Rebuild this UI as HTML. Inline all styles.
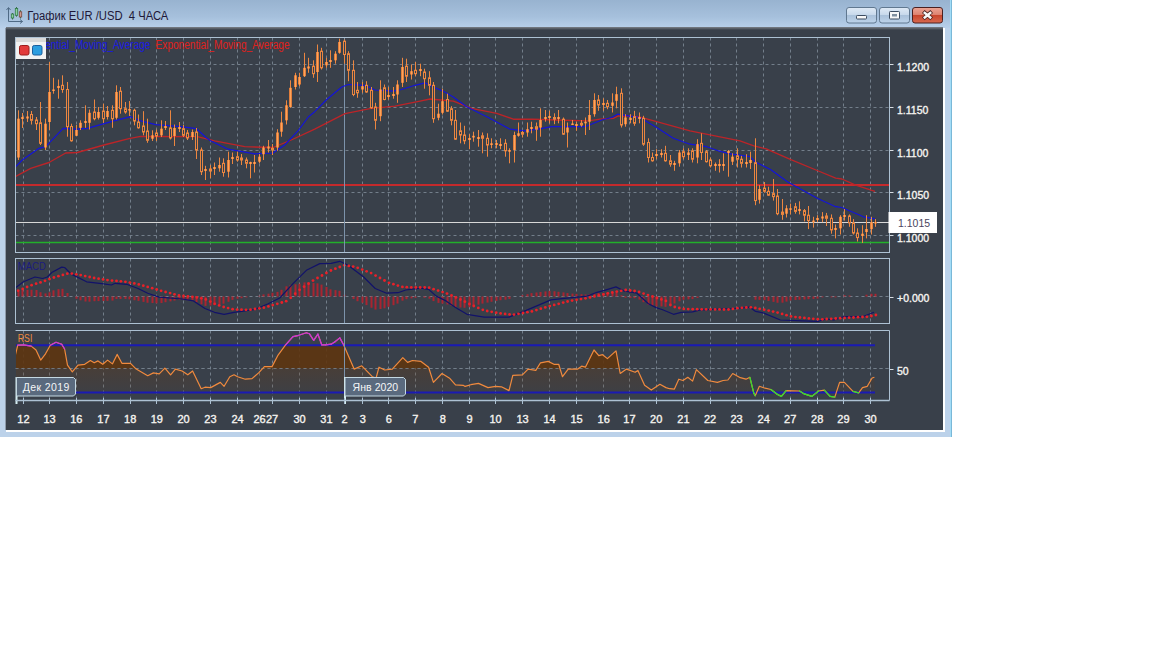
<!DOCTYPE html>
<html><head><meta charset="utf-8">
<style>
html,body{margin:0;padding:0;background:#fff;width:1152px;height:648px;overflow:hidden}
#win{position:absolute;left:0;top:0;width:952px;height:437px;background:#bcd2ea}
#tb{position:absolute;left:0;top:0;width:952px;height:28px;background:linear-gradient(#98b3d0,#a6c0dc 60%,#b8d0ea)}
#title{position:absolute;left:27px;top:6px;font:12px "Liberation Sans",sans-serif;color:#1c1633;white-space:pre}
#client{position:absolute;left:6px;top:28px;width:937px;height:402px;background:#39404a}
svg text{font-family:"Liberation Sans",sans-serif}
.ax{font-size:10.5px;fill:#f6f4f0;stroke:#f6f4f0;stroke-width:0.35px}
.xl{font-size:11px;fill:#f6f4f0;stroke:#f6f4f0;stroke-width:0.35px}
</style></head><body>
<div id="win">
<div id="tb"></div>
<div style="position:absolute;left:943px;top:28px;width:2px;height:404px;background:#fff"></div>
<div style="position:absolute;left:6px;top:430px;width:939px;height:2px;background:#fff"></div>
<div style="position:absolute;left:5px;top:28px;width:1px;height:402px;background:#8e9bab"></div>
<div style="position:absolute;left:950px;top:0;width:1px;height:437px;background:#a2dcf6"></div><div style="position:absolute;left:951px;top:0;width:1px;height:437px;background:#7ab8d8"></div>
<svg width="952" height="28" style="position:absolute;left:0;top:0">
<defs>
<linearGradient id="bmin" x1="0" y1="0" x2="0" y2="1"><stop offset="0" stop-color="#dfeaf6"/><stop offset="0.45" stop-color="#c9daec"/><stop offset="0.5" stop-color="#a9c1da"/><stop offset="1" stop-color="#bdd3ea"/></linearGradient>
<linearGradient id="bcls" x1="0" y1="0" x2="0" y2="1"><stop offset="0" stop-color="#eca595"/><stop offset="0.45" stop-color="#de8472"/><stop offset="0.5" stop-color="#c8452c"/><stop offset="1" stop-color="#d86a50"/></linearGradient>
</defs>
<text x="27.3" y="20" textLength="141" lengthAdjust="spacingAndGlyphs" style="font:12px 'Liberation Sans',sans-serif;fill:#1e1838;white-space:pre" xml:space="preserve">График EUR /USD  4 ЧАСА</text>
<g fill="none" stroke="#4f6a85" stroke-width="1">
<path d="M8.5 8 V21.5 H22.5" />
<path d="M6.5 10 L8.5 7.5 L10.5 10" />
<path d="M20 19.5 L22.5 21.5 L20 23.5" />
</g>
<path d="M12.5 13 V19.5 M16.5 7 V16.7 M20.5 10.2 V18.5" stroke="#3f6e52" stroke-width="1"/>
<rect x="11.3" y="14" width="2.4" height="4" fill="#8fd0a0" stroke="#2f7a48" stroke-width="0.8"/>
<rect x="15.3" y="8.5" width="2.4" height="6.8" fill="#8fd0a0" stroke="#2f7a48" stroke-width="0.8"/>
<rect x="19.3" y="11.8" width="2.4" height="5.2" fill="#d09a90" stroke="#7a4a40" stroke-width="0.8"/>
<rect x="846.5" y="7.5" width="30" height="15.5" rx="2.5" fill="url(#bmin)" stroke="#607890"/>
<rect x="879.5" y="7.5" width="30" height="15.5" rx="2.5" fill="url(#bmin)" stroke="#607890"/>
<rect x="912.5" y="7.5" width="30" height="15.5" rx="2.5" fill="url(#bcls)" stroke="#4a2020"/>
<rect x="856.5" y="15.5" width="10" height="3.5" rx="0.8" fill="#f8f8f8" stroke="#3c4c60"/>
<rect x="889.5" y="11.5" width="10" height="7.5" rx="0.8" fill="#f8f8f8" stroke="#3c4c60"/>
<rect x="892" y="14" width="5" height="2.5" fill="#8090a0"/>
<path d="M923.3 11.6 L931.7 18.8 M931.7 11.6 L923.3 18.8" stroke="#4a2420" stroke-width="4" stroke-linecap="butt"/>
<path d="M923.8 12.1 L931.2 18.3 M931.2 12.1 L923.8 18.3" stroke="#f8f8f8" stroke-width="2.5" stroke-linecap="butt"/>
</svg>
<div id="client"></div>
<svg width="952" height="437" style="position:absolute;left:0;top:0">
<defs>
<linearGradient id="shadow" x1="0" y1="0" x2="0" y2="1"><stop offset="0" stop-color="#7b8188"/><stop offset="1" stop-color="#39404a"/></linearGradient>
<linearGradient id="rsif" gradientUnits="userSpaceOnUse" x1="0" y1="345" x2="0" y2="400"><stop offset="0" stop-color="#5c3008" stop-opacity="1"/><stop offset="0.27" stop-color="#5c3008" stop-opacity="0.62"/><stop offset="0.55" stop-color="#5c3008" stop-opacity="0.25"/><stop offset="0.78" stop-color="#5c3008" stop-opacity="0.05"/><stop offset="1" stop-color="#5c3008" stop-opacity="0"/></linearGradient>
<clipPath id="cmain"><rect x="16" y="38" width="873" height="214"/></clipPath>
<clipPath id="cmacd"><rect x="16" y="259" width="873" height="64"/></clipPath>
<clipPath id="crsi"><rect x="16" y="331" width="873" height="69"/></clipPath>
</defs>
<rect x="6" y="27" width="937" height="3" fill="url(#shadow)"/>
<line x1="23.5" y1="37.5" x2="23.5" y2="252.5" stroke="#737e8a" stroke-dasharray="3,3"/>
<line x1="23.5" y1="258.5" x2="23.5" y2="323.5" stroke="#737e8a" stroke-dasharray="3,3"/>
<line x1="23.5" y1="330.5" x2="23.5" y2="400.5" stroke="#737e8a" stroke-dasharray="3,3"/>
<line x1="49.5" y1="37.5" x2="49.5" y2="252.5" stroke="#737e8a" stroke-dasharray="3,3"/>
<line x1="49.5" y1="258.5" x2="49.5" y2="323.5" stroke="#737e8a" stroke-dasharray="3,3"/>
<line x1="49.5" y1="330.5" x2="49.5" y2="400.5" stroke="#737e8a" stroke-dasharray="3,3"/>
<line x1="76.5" y1="37.5" x2="76.5" y2="252.5" stroke="#737e8a" stroke-dasharray="3,3"/>
<line x1="76.5" y1="258.5" x2="76.5" y2="323.5" stroke="#737e8a" stroke-dasharray="3,3"/>
<line x1="76.5" y1="330.5" x2="76.5" y2="400.5" stroke="#737e8a" stroke-dasharray="3,3"/>
<line x1="103.5" y1="37.5" x2="103.5" y2="252.5" stroke="#737e8a" stroke-dasharray="3,3"/>
<line x1="103.5" y1="258.5" x2="103.5" y2="323.5" stroke="#737e8a" stroke-dasharray="3,3"/>
<line x1="103.5" y1="330.5" x2="103.5" y2="400.5" stroke="#737e8a" stroke-dasharray="3,3"/>
<line x1="130.5" y1="37.5" x2="130.5" y2="252.5" stroke="#737e8a" stroke-dasharray="3,3"/>
<line x1="130.5" y1="258.5" x2="130.5" y2="323.5" stroke="#737e8a" stroke-dasharray="3,3"/>
<line x1="130.5" y1="330.5" x2="130.5" y2="400.5" stroke="#737e8a" stroke-dasharray="3,3"/>
<line x1="156.5" y1="37.5" x2="156.5" y2="252.5" stroke="#737e8a" stroke-dasharray="3,3"/>
<line x1="156.5" y1="258.5" x2="156.5" y2="323.5" stroke="#737e8a" stroke-dasharray="3,3"/>
<line x1="156.5" y1="330.5" x2="156.5" y2="400.5" stroke="#737e8a" stroke-dasharray="3,3"/>
<line x1="183.5" y1="37.5" x2="183.5" y2="252.5" stroke="#737e8a" stroke-dasharray="3,3"/>
<line x1="183.5" y1="258.5" x2="183.5" y2="323.5" stroke="#737e8a" stroke-dasharray="3,3"/>
<line x1="183.5" y1="330.5" x2="183.5" y2="400.5" stroke="#737e8a" stroke-dasharray="3,3"/>
<line x1="210.5" y1="37.5" x2="210.5" y2="252.5" stroke="#737e8a" stroke-dasharray="3,3"/>
<line x1="210.5" y1="258.5" x2="210.5" y2="323.5" stroke="#737e8a" stroke-dasharray="3,3"/>
<line x1="210.5" y1="330.5" x2="210.5" y2="400.5" stroke="#737e8a" stroke-dasharray="3,3"/>
<line x1="237.5" y1="37.5" x2="237.5" y2="252.5" stroke="#737e8a" stroke-dasharray="3,3"/>
<line x1="237.5" y1="258.5" x2="237.5" y2="323.5" stroke="#737e8a" stroke-dasharray="3,3"/>
<line x1="237.5" y1="330.5" x2="237.5" y2="400.5" stroke="#737e8a" stroke-dasharray="3,3"/>
<line x1="259.5" y1="37.5" x2="259.5" y2="252.5" stroke="#737e8a" stroke-dasharray="3,3"/>
<line x1="259.5" y1="258.5" x2="259.5" y2="323.5" stroke="#737e8a" stroke-dasharray="3,3"/>
<line x1="259.5" y1="330.5" x2="259.5" y2="400.5" stroke="#737e8a" stroke-dasharray="3,3"/>
<line x1="272.5" y1="37.5" x2="272.5" y2="252.5" stroke="#737e8a" stroke-dasharray="3,3"/>
<line x1="272.5" y1="258.5" x2="272.5" y2="323.5" stroke="#737e8a" stroke-dasharray="3,3"/>
<line x1="272.5" y1="330.5" x2="272.5" y2="400.5" stroke="#737e8a" stroke-dasharray="3,3"/>
<line x1="299.5" y1="37.5" x2="299.5" y2="252.5" stroke="#737e8a" stroke-dasharray="3,3"/>
<line x1="299.5" y1="258.5" x2="299.5" y2="323.5" stroke="#737e8a" stroke-dasharray="3,3"/>
<line x1="299.5" y1="330.5" x2="299.5" y2="400.5" stroke="#737e8a" stroke-dasharray="3,3"/>
<line x1="326.5" y1="37.5" x2="326.5" y2="252.5" stroke="#737e8a" stroke-dasharray="3,3"/>
<line x1="326.5" y1="258.5" x2="326.5" y2="323.5" stroke="#737e8a" stroke-dasharray="3,3"/>
<line x1="326.5" y1="330.5" x2="326.5" y2="400.5" stroke="#737e8a" stroke-dasharray="3,3"/>
<line x1="362.5" y1="37.5" x2="362.5" y2="252.5" stroke="#737e8a" stroke-dasharray="3,3"/>
<line x1="362.5" y1="258.5" x2="362.5" y2="323.5" stroke="#737e8a" stroke-dasharray="3,3"/>
<line x1="362.5" y1="330.5" x2="362.5" y2="400.5" stroke="#737e8a" stroke-dasharray="3,3"/>
<line x1="388.5" y1="37.5" x2="388.5" y2="252.5" stroke="#737e8a" stroke-dasharray="3,3"/>
<line x1="388.5" y1="258.5" x2="388.5" y2="323.5" stroke="#737e8a" stroke-dasharray="3,3"/>
<line x1="388.5" y1="330.5" x2="388.5" y2="400.5" stroke="#737e8a" stroke-dasharray="3,3"/>
<line x1="415.5" y1="37.5" x2="415.5" y2="252.5" stroke="#737e8a" stroke-dasharray="3,3"/>
<line x1="415.5" y1="258.5" x2="415.5" y2="323.5" stroke="#737e8a" stroke-dasharray="3,3"/>
<line x1="415.5" y1="330.5" x2="415.5" y2="400.5" stroke="#737e8a" stroke-dasharray="3,3"/>
<line x1="442.5" y1="37.5" x2="442.5" y2="252.5" stroke="#737e8a" stroke-dasharray="3,3"/>
<line x1="442.5" y1="258.5" x2="442.5" y2="323.5" stroke="#737e8a" stroke-dasharray="3,3"/>
<line x1="442.5" y1="330.5" x2="442.5" y2="400.5" stroke="#737e8a" stroke-dasharray="3,3"/>
<line x1="469.5" y1="37.5" x2="469.5" y2="252.5" stroke="#737e8a" stroke-dasharray="3,3"/>
<line x1="469.5" y1="258.5" x2="469.5" y2="323.5" stroke="#737e8a" stroke-dasharray="3,3"/>
<line x1="469.5" y1="330.5" x2="469.5" y2="400.5" stroke="#737e8a" stroke-dasharray="3,3"/>
<line x1="495.5" y1="37.5" x2="495.5" y2="252.5" stroke="#737e8a" stroke-dasharray="3,3"/>
<line x1="495.5" y1="258.5" x2="495.5" y2="323.5" stroke="#737e8a" stroke-dasharray="3,3"/>
<line x1="495.5" y1="330.5" x2="495.5" y2="400.5" stroke="#737e8a" stroke-dasharray="3,3"/>
<line x1="522.5" y1="37.5" x2="522.5" y2="252.5" stroke="#737e8a" stroke-dasharray="3,3"/>
<line x1="522.5" y1="258.5" x2="522.5" y2="323.5" stroke="#737e8a" stroke-dasharray="3,3"/>
<line x1="522.5" y1="330.5" x2="522.5" y2="400.5" stroke="#737e8a" stroke-dasharray="3,3"/>
<line x1="549.5" y1="37.5" x2="549.5" y2="252.5" stroke="#737e8a" stroke-dasharray="3,3"/>
<line x1="549.5" y1="258.5" x2="549.5" y2="323.5" stroke="#737e8a" stroke-dasharray="3,3"/>
<line x1="549.5" y1="330.5" x2="549.5" y2="400.5" stroke="#737e8a" stroke-dasharray="3,3"/>
<line x1="576.5" y1="37.5" x2="576.5" y2="252.5" stroke="#737e8a" stroke-dasharray="3,3"/>
<line x1="576.5" y1="258.5" x2="576.5" y2="323.5" stroke="#737e8a" stroke-dasharray="3,3"/>
<line x1="576.5" y1="330.5" x2="576.5" y2="400.5" stroke="#737e8a" stroke-dasharray="3,3"/>
<line x1="603.5" y1="37.5" x2="603.5" y2="252.5" stroke="#737e8a" stroke-dasharray="3,3"/>
<line x1="603.5" y1="258.5" x2="603.5" y2="323.5" stroke="#737e8a" stroke-dasharray="3,3"/>
<line x1="603.5" y1="330.5" x2="603.5" y2="400.5" stroke="#737e8a" stroke-dasharray="3,3"/>
<line x1="629.5" y1="37.5" x2="629.5" y2="252.5" stroke="#737e8a" stroke-dasharray="3,3"/>
<line x1="629.5" y1="258.5" x2="629.5" y2="323.5" stroke="#737e8a" stroke-dasharray="3,3"/>
<line x1="629.5" y1="330.5" x2="629.5" y2="400.5" stroke="#737e8a" stroke-dasharray="3,3"/>
<line x1="656.5" y1="37.5" x2="656.5" y2="252.5" stroke="#737e8a" stroke-dasharray="3,3"/>
<line x1="656.5" y1="258.5" x2="656.5" y2="323.5" stroke="#737e8a" stroke-dasharray="3,3"/>
<line x1="656.5" y1="330.5" x2="656.5" y2="400.5" stroke="#737e8a" stroke-dasharray="3,3"/>
<line x1="683.5" y1="37.5" x2="683.5" y2="252.5" stroke="#737e8a" stroke-dasharray="3,3"/>
<line x1="683.5" y1="258.5" x2="683.5" y2="323.5" stroke="#737e8a" stroke-dasharray="3,3"/>
<line x1="683.5" y1="330.5" x2="683.5" y2="400.5" stroke="#737e8a" stroke-dasharray="3,3"/>
<line x1="710.5" y1="37.5" x2="710.5" y2="252.5" stroke="#737e8a" stroke-dasharray="3,3"/>
<line x1="710.5" y1="258.5" x2="710.5" y2="323.5" stroke="#737e8a" stroke-dasharray="3,3"/>
<line x1="710.5" y1="330.5" x2="710.5" y2="400.5" stroke="#737e8a" stroke-dasharray="3,3"/>
<line x1="736.5" y1="37.5" x2="736.5" y2="252.5" stroke="#737e8a" stroke-dasharray="3,3"/>
<line x1="736.5" y1="258.5" x2="736.5" y2="323.5" stroke="#737e8a" stroke-dasharray="3,3"/>
<line x1="736.5" y1="330.5" x2="736.5" y2="400.5" stroke="#737e8a" stroke-dasharray="3,3"/>
<line x1="763.5" y1="37.5" x2="763.5" y2="252.5" stroke="#737e8a" stroke-dasharray="3,3"/>
<line x1="763.5" y1="258.5" x2="763.5" y2="323.5" stroke="#737e8a" stroke-dasharray="3,3"/>
<line x1="763.5" y1="330.5" x2="763.5" y2="400.5" stroke="#737e8a" stroke-dasharray="3,3"/>
<line x1="790.5" y1="37.5" x2="790.5" y2="252.5" stroke="#737e8a" stroke-dasharray="3,3"/>
<line x1="790.5" y1="258.5" x2="790.5" y2="323.5" stroke="#737e8a" stroke-dasharray="3,3"/>
<line x1="790.5" y1="330.5" x2="790.5" y2="400.5" stroke="#737e8a" stroke-dasharray="3,3"/>
<line x1="817.5" y1="37.5" x2="817.5" y2="252.5" stroke="#737e8a" stroke-dasharray="3,3"/>
<line x1="817.5" y1="258.5" x2="817.5" y2="323.5" stroke="#737e8a" stroke-dasharray="3,3"/>
<line x1="817.5" y1="330.5" x2="817.5" y2="400.5" stroke="#737e8a" stroke-dasharray="3,3"/>
<line x1="843.5" y1="37.5" x2="843.5" y2="252.5" stroke="#737e8a" stroke-dasharray="3,3"/>
<line x1="843.5" y1="258.5" x2="843.5" y2="323.5" stroke="#737e8a" stroke-dasharray="3,3"/>
<line x1="843.5" y1="330.5" x2="843.5" y2="400.5" stroke="#737e8a" stroke-dasharray="3,3"/>
<line x1="870.5" y1="37.5" x2="870.5" y2="252.5" stroke="#737e8a" stroke-dasharray="3,3"/>
<line x1="870.5" y1="258.5" x2="870.5" y2="323.5" stroke="#737e8a" stroke-dasharray="3,3"/>
<line x1="870.5" y1="330.5" x2="870.5" y2="400.5" stroke="#737e8a" stroke-dasharray="3,3"/>
<line x1="15.5" y1="64.5" x2="889.5" y2="64.5" stroke="#737e8a" stroke-dasharray="3,3"/>
<line x1="889.5" y1="64.5" x2="893.5" y2="64.5" stroke="#d8dde2"/>
<text x="897" y="71.0" class="ax">1.1200</text>
<line x1="15.5" y1="107.5" x2="889.5" y2="107.5" stroke="#737e8a" stroke-dasharray="3,3"/>
<line x1="889.5" y1="107.5" x2="893.5" y2="107.5" stroke="#d8dde2"/>
<text x="897" y="114.0" class="ax">1.1150</text>
<line x1="15.5" y1="150.5" x2="889.5" y2="150.5" stroke="#737e8a" stroke-dasharray="3,3"/>
<line x1="889.5" y1="150.5" x2="893.5" y2="150.5" stroke="#d8dde2"/>
<text x="897" y="157.0" class="ax">1.1100</text>
<line x1="15.5" y1="192.5" x2="889.5" y2="192.5" stroke="#737e8a" stroke-dasharray="3,3"/>
<line x1="889.5" y1="192.5" x2="893.5" y2="192.5" stroke="#d8dde2"/>
<text x="897" y="199.0" class="ax">1.1050</text>
<line x1="15.5" y1="235.5" x2="889.5" y2="235.5" stroke="#737e8a" stroke-dasharray="3,3"/>
<line x1="889.5" y1="235.5" x2="893.5" y2="235.5" stroke="#d8dde2"/>
<text x="897" y="242.0" class="ax">1.1000</text>
<line x1="15.5" y1="296.5" x2="889.5" y2="296.5" stroke="#737e8a" stroke-dasharray="3,3"/>
<line x1="889.5" y1="297.5" x2="893.5" y2="297.5" stroke="#d8dde2"/>
<text x="897" y="302" class="ax">+0.000</text>
<line x1="15.5" y1="368.5" x2="889.5" y2="368.5" stroke="#737e8a" stroke-dasharray="3,3"/>
<line x1="889.5" y1="369.5" x2="893.5" y2="369.5" stroke="#d8dde2"/>
<text x="897" y="375" class="ax">50</text>
<defs><linearGradient id="cbody" x1="0" y1="0" x2="1" y2="0"><stop offset="0" stop-color="#d06a2c"/><stop offset="0.5" stop-color="#ffa45a"/><stop offset="1" stop-color="#d06a2c"/></linearGradient></defs>
<g clip-path="url(#cmain)">
<line x1="16" y1="185" x2="889" y2="185" stroke="#c42a2c" stroke-width="1.8"/>
<line x1="16" y1="242.5" x2="889" y2="242.5" stroke="#22b02a" stroke-width="1.7"/>
<line x1="16" y1="222.5" x2="889" y2="222.5" stroke="#d8d8d8" stroke-width="1"/>
<line x1="344.5" y1="38" x2="344.5" y2="252" stroke="#7d93ab" stroke-width="1"/>
<polyline points="15.0,176.7 30.7,168.3 49.0,162.5 65.7,153.0 77.3,152.5 104.0,145.0 129.0,138.7 140.7,136.3 197.3,136.7 214.7,140.8 244.7,146.7 273.0,147.5 291.3,140.0 314.7,129.2 345.0,113.7 370.0,108.7 395.0,106.2 420.0,101.2 430.0,99.0 453.3,101.2 471.7,108.3 496.7,113.3 513.3,119.2 533.3,119.2 555.0,120.0 588.3,120.8 600.0,119.2 613.3,118.3 618.3,115.8 638.3,116.7 656.7,121.7 690.0,130.8 715.0,135.8 740.0,140.8 753.9,145.8 766.2,148.9 790.9,159.7 817.2,170.5 835.7,178.2 841.9,179.0 855.7,185.1 875.0,191.3" fill="none" stroke="#bc2428" stroke-width="1.35" stroke-linejoin="round"/>
<polyline points="15.0,167.5 22.3,160.0 39.0,148.3 45.7,146.7 63.2,128.3 77.3,129.2 87.3,128.3 114.0,120.8 130.7,116.7 140.7,120.8 155.7,124.7 180.7,126.7 196.5,128.7 206.0,137.5 210.5,140.8 228.0,149.2 254.7,153.8 273.0,153.0 284.7,145.0 298.0,130.8 308.3,117.0 314.7,111.7 326.7,99.5 341.7,87.0 348.3,84.5 365.0,85.3 375.0,90.0 393.3,91.2 401.7,89.5 415.0,85.3 425.0,82.8 433.3,87.0 443.3,91.2 453.3,97.0 466.7,106.7 488.3,117.5 510.0,129.2 525.0,130.8 538.3,129.2 551.7,126.7 585.0,126.7 601.7,120.0 611.7,117.5 617.5,114.2 628.3,115.8 640.0,117.5 656.7,127.5 673.3,138.3 690.0,144.2 706.7,146.7 718.3,150.8 731.7,154.2 750.0,156.7 755.0,161.7 770.9,169.7 787.8,182.0 817.2,198.2 835.7,206.7 841.9,207.5 863.5,216.8 875.0,218.8" fill="none" stroke="#1414d8" stroke-width="1.2" stroke-linejoin="round"/>
<line x1="18.5" y1="110.3" x2="18.5" y2="160.0" stroke="#ec8640"/>
<rect x="17" y="118.7" width="3" height="38.8" fill="url(#cbody)"/>
<line x1="22.5" y1="113.0" x2="22.5" y2="128.0" stroke="#ec8640"/>
<rect x="21" y="117.0" width="3" height="2.0" fill="url(#cbody)"/>
<line x1="27.5" y1="111.0" x2="27.5" y2="122.0" stroke="#ec8640"/>
<rect x="26" y="116.5" width="3" height="2.0" fill="url(#cbody)"/>
<line x1="31.5" y1="111.0" x2="31.5" y2="124.5" stroke="#ec8640"/>
<rect x="30.5" y="114.5" width="2" height="5.8" fill="#39404a" stroke="#ec8640"/>
<line x1="36.5" y1="117.0" x2="36.5" y2="130.0" stroke="#ec8640"/>
<rect x="35.5" y="120.0" width="2" height="3.7" fill="#39404a" stroke="#ec8640"/>
<line x1="40.5" y1="102.0" x2="40.5" y2="145.0" stroke="#ec8640"/>
<rect x="39.5" y="122.8" width="2" height="20.5" fill="#39404a" stroke="#ec8640"/>
<line x1="45.5" y1="118.7" x2="45.5" y2="150.0" stroke="#ec8640"/>
<rect x="44" y="123.7" width="3" height="23.8" fill="url(#cbody)"/>
<line x1="49.5" y1="62.0" x2="49.5" y2="130.0" stroke="#ec8640"/>
<rect x="48" y="92.0" width="3" height="30.0" fill="url(#cbody)"/>
<line x1="53.5" y1="77.8" x2="53.5" y2="93.7" stroke="#ec8640"/>
<rect x="52" y="89.5" width="3" height="1.5" fill="url(#cbody)"/>
<line x1="58.5" y1="79.5" x2="58.5" y2="98.7" stroke="#ec8640"/>
<rect x="57" y="86.0" width="3" height="2.0" fill="url(#cbody)"/>
<line x1="62.5" y1="75.3" x2="62.5" y2="92.8" stroke="#ec8640"/>
<rect x="61.5" y="85.3" width="2" height="4.2" fill="#39404a" stroke="#ec8640"/>
<line x1="67.5" y1="82.0" x2="67.5" y2="136.7" stroke="#ec8640"/>
<rect x="66.5" y="89.5" width="2" height="37.2" fill="#39404a" stroke="#ec8640"/>
<line x1="71.5" y1="123.7" x2="71.5" y2="141.7" stroke="#ec8640"/>
<rect x="70.5" y="126.5" width="2" height="14.3" fill="#39404a" stroke="#ec8640"/>
<line x1="76.5" y1="125.0" x2="76.5" y2="136.0" stroke="#ec8640"/>
<rect x="75" y="130.0" width="3" height="5.8" fill="url(#cbody)"/>
<line x1="80.5" y1="120.3" x2="80.5" y2="130.0" stroke="#ec8640"/>
<rect x="79" y="122.8" width="3" height="5.0" fill="url(#cbody)"/>
<line x1="85.5" y1="105.3" x2="85.5" y2="127.8" stroke="#ec8640"/>
<rect x="84" y="121.0" width="3" height="2.0" fill="url(#cbody)"/>
<line x1="89.5" y1="109.5" x2="89.5" y2="129.5" stroke="#ec8640"/>
<rect x="88" y="112.8" width="3" height="10.0" fill="url(#cbody)"/>
<line x1="94.5" y1="99.5" x2="94.5" y2="120.3" stroke="#ec8640"/>
<rect x="93.5" y="112.0" width="2" height="6.7" fill="#39404a" stroke="#ec8640"/>
<line x1="98.5" y1="107.0" x2="98.5" y2="119.5" stroke="#ec8640"/>
<rect x="97" y="112.0" width="3" height="5.8" fill="url(#cbody)"/>
<line x1="103.5" y1="103.7" x2="103.5" y2="122.8" stroke="#ec8640"/>
<rect x="102.5" y="111.0" width="2" height="7.7" fill="#39404a" stroke="#ec8640"/>
<line x1="107.5" y1="106.0" x2="107.5" y2="119.5" stroke="#ec8640"/>
<rect x="106" y="111.0" width="3" height="6.0" fill="url(#cbody)"/>
<line x1="112.5" y1="105.3" x2="112.5" y2="127.8" stroke="#ec8640"/>
<rect x="111.5" y="110.3" width="2" height="8.4" fill="#39404a" stroke="#ec8640"/>
<line x1="116.5" y1="85.3" x2="116.5" y2="119.5" stroke="#ec8640"/>
<rect x="115" y="92.0" width="3" height="25.8" fill="url(#cbody)"/>
<line x1="120.5" y1="87.0" x2="120.5" y2="113.7" stroke="#ec8640"/>
<rect x="119.5" y="91.2" width="2" height="17.5" fill="#39404a" stroke="#ec8640"/>
<line x1="125.5" y1="102.0" x2="125.5" y2="113.7" stroke="#ec8640"/>
<rect x="124.5" y="108.7" width="2" height="3.3" fill="#39404a" stroke="#ec8640"/>
<line x1="129.5" y1="101.0" x2="129.5" y2="116.0" stroke="#ec8640"/>
<rect x="128" y="109.0" width="3" height="1.5" fill="url(#cbody)"/>
<line x1="134.5" y1="108.7" x2="134.5" y2="125.3" stroke="#ec8640"/>
<rect x="133.5" y="110.3" width="2" height="10.7" fill="#39404a" stroke="#ec8640"/>
<line x1="138.5" y1="114.5" x2="138.5" y2="128.7" stroke="#ec8640"/>
<rect x="137.5" y="122.0" width="2" height="5.8" fill="#39404a" stroke="#ec8640"/>
<line x1="143.5" y1="111.2" x2="143.5" y2="135.3" stroke="#ec8640"/>
<rect x="142.5" y="126.0" width="2" height="6.0" fill="#39404a" stroke="#ec8640"/>
<line x1="147.5" y1="118.7" x2="147.5" y2="142.8" stroke="#ec8640"/>
<rect x="146.5" y="131.0" width="2" height="9.3" fill="#39404a" stroke="#ec8640"/>
<line x1="152.5" y1="130.3" x2="152.5" y2="141.0" stroke="#ec8640"/>
<rect x="151" y="135.3" width="3" height="3.4" fill="url(#cbody)"/>
<line x1="156.5" y1="129.5" x2="156.5" y2="141.0" stroke="#ec8640"/>
<rect x="155.5" y="133.0" width="2" height="3.0" fill="#39404a" stroke="#ec8640"/>
<line x1="161.5" y1="120.3" x2="161.5" y2="137.0" stroke="#ec8640"/>
<rect x="160" y="128.7" width="3" height="6.6" fill="url(#cbody)"/>
<line x1="165.5" y1="121.0" x2="165.5" y2="130.0" stroke="#ec8640"/>
<rect x="164" y="126.0" width="3" height="2.0" fill="url(#cbody)"/>
<line x1="170.5" y1="110.3" x2="170.5" y2="139.5" stroke="#ec8640"/>
<rect x="169.5" y="128.0" width="2" height="10.0" fill="#39404a" stroke="#ec8640"/>
<line x1="174.5" y1="124.5" x2="174.5" y2="146.0" stroke="#ec8640"/>
<rect x="173" y="128.0" width="3" height="8.0" fill="url(#cbody)"/>
<line x1="179.5" y1="122.0" x2="179.5" y2="132.0" stroke="#ec8640"/>
<rect x="178" y="127.0" width="3" height="2.0" fill="url(#cbody)"/>
<line x1="183.5" y1="125.0" x2="183.5" y2="137.0" stroke="#ec8640"/>
<rect x="182.5" y="128.7" width="2" height="6.6" fill="#39404a" stroke="#ec8640"/>
<line x1="187.5" y1="130.0" x2="187.5" y2="140.0" stroke="#ec8640"/>
<rect x="186.5" y="133.0" width="2" height="5.0" fill="#39404a" stroke="#ec8640"/>
<line x1="192.5" y1="129.5" x2="192.5" y2="140.0" stroke="#ec8640"/>
<rect x="191" y="132.0" width="3" height="5.0" fill="url(#cbody)"/>
<line x1="196.5" y1="128.0" x2="196.5" y2="159.0" stroke="#ec8640"/>
<rect x="195.5" y="132.0" width="2" height="18.0" fill="#39404a" stroke="#ec8640"/>
<line x1="201.5" y1="147.5" x2="201.5" y2="175.0" stroke="#ec8640"/>
<rect x="200.5" y="150.0" width="2" height="21.7" fill="#39404a" stroke="#ec8640"/>
<line x1="205.5" y1="165.8" x2="205.5" y2="180.0" stroke="#ec8640"/>
<rect x="204" y="169.0" width="3" height="2.0" fill="url(#cbody)"/>
<line x1="210.5" y1="165.0" x2="210.5" y2="178.3" stroke="#ec8640"/>
<rect x="209.5" y="169.0" width="2" height="2.0" fill="#39404a" stroke="#ec8640"/>
<line x1="214.5" y1="162.5" x2="214.5" y2="175.0" stroke="#ec8640"/>
<rect x="213" y="167.0" width="3" height="2.0" fill="url(#cbody)"/>
<line x1="219.5" y1="157.5" x2="219.5" y2="171.7" stroke="#ec8640"/>
<rect x="218" y="165.0" width="3" height="3.3" fill="url(#cbody)"/>
<line x1="223.5" y1="158.3" x2="223.5" y2="176.7" stroke="#ec8640"/>
<rect x="222.5" y="163.3" width="2" height="9.2" fill="#39404a" stroke="#ec8640"/>
<line x1="228.5" y1="151.7" x2="228.5" y2="177.5" stroke="#ec8640"/>
<rect x="227" y="160.0" width="3" height="11.7" fill="url(#cbody)"/>
<line x1="232.5" y1="152.5" x2="232.5" y2="164.0" stroke="#ec8640"/>
<rect x="231" y="157.0" width="3" height="2.0" fill="url(#cbody)"/>
<line x1="237.5" y1="151.7" x2="237.5" y2="161.7" stroke="#ec8640"/>
<rect x="236.5" y="156.7" width="2" height="3.3" fill="#39404a" stroke="#ec8640"/>
<line x1="241.5" y1="154.0" x2="241.5" y2="165.0" stroke="#ec8640"/>
<rect x="240.5" y="158.0" width="2" height="2.0" fill="#39404a" stroke="#ec8640"/>
<line x1="246.5" y1="157.5" x2="246.5" y2="168.3" stroke="#ec8640"/>
<rect x="245.5" y="160.0" width="2" height="3.3" fill="#39404a" stroke="#ec8640"/>
<line x1="250.5" y1="161.7" x2="250.5" y2="178.3" stroke="#ec8640"/>
<rect x="249" y="162.0" width="3" height="2.0" fill="url(#cbody)"/>
<line x1="254.5" y1="155.0" x2="254.5" y2="172.5" stroke="#ec8640"/>
<rect x="253" y="162.0" width="3" height="2.0" fill="url(#cbody)"/>
<line x1="259.5" y1="154.0" x2="259.5" y2="163.3" stroke="#ec8640"/>
<rect x="258" y="156.7" width="3" height="5.0" fill="url(#cbody)"/>
<line x1="263.5" y1="145.8" x2="263.5" y2="160.0" stroke="#ec8640"/>
<rect x="262" y="147.5" width="3" height="6.7" fill="url(#cbody)"/>
<line x1="268.5" y1="140.0" x2="268.5" y2="152.5" stroke="#ec8640"/>
<rect x="267" y="146.5" width="3" height="2.0" fill="url(#cbody)"/>
<line x1="272.5" y1="144.0" x2="272.5" y2="155.0" stroke="#ec8640"/>
<rect x="271.5" y="148.3" width="2" height="1.7" fill="#39404a" stroke="#ec8640"/>
<line x1="277.5" y1="129.2" x2="277.5" y2="150.8" stroke="#ec8640"/>
<rect x="276" y="132.5" width="3" height="15.0" fill="url(#cbody)"/>
<line x1="281.5" y1="111.7" x2="281.5" y2="136.7" stroke="#ec8640"/>
<rect x="280" y="122.5" width="3" height="9.2" fill="url(#cbody)"/>
<line x1="286.5" y1="100.3" x2="286.5" y2="124.5" stroke="#ec8640"/>
<rect x="285" y="105.3" width="3" height="15.0" fill="url(#cbody)"/>
<line x1="290.5" y1="80.3" x2="290.5" y2="107.8" stroke="#ec8640"/>
<rect x="289" y="87.8" width="3" height="19.2" fill="url(#cbody)"/>
<line x1="295.5" y1="72.8" x2="295.5" y2="89.5" stroke="#ec8640"/>
<rect x="294" y="75.3" width="3" height="11.7" fill="url(#cbody)"/>
<line x1="299.5" y1="72.8" x2="299.5" y2="86.2" stroke="#ec8640"/>
<rect x="298" y="77.0" width="3" height="7.5" fill="url(#cbody)"/>
<line x1="304.5" y1="52.8" x2="304.5" y2="77.0" stroke="#ec8640"/>
<rect x="303" y="67.8" width="3" height="8.4" fill="url(#cbody)"/>
<line x1="308.5" y1="57.8" x2="308.5" y2="72.8" stroke="#ec8640"/>
<rect x="307" y="66.5" width="3" height="2.0" fill="url(#cbody)"/>
<line x1="313.5" y1="60.3" x2="313.5" y2="77.8" stroke="#ec8640"/>
<rect x="312.5" y="66.2" width="2" height="7.5" fill="#39404a" stroke="#ec8640"/>
<line x1="317.5" y1="44.5" x2="317.5" y2="82.0" stroke="#ec8640"/>
<rect x="316" y="52.0" width="3" height="20.0" fill="url(#cbody)"/>
<line x1="321.5" y1="47.8" x2="321.5" y2="69.5" stroke="#ec8640"/>
<rect x="320.5" y="51.2" width="2" height="16.6" fill="#39404a" stroke="#ec8640"/>
<line x1="326.5" y1="57.8" x2="326.5" y2="67.8" stroke="#ec8640"/>
<rect x="325" y="62.0" width="3" height="3.3" fill="url(#cbody)"/>
<line x1="330.5" y1="50.3" x2="330.5" y2="67.8" stroke="#ec8640"/>
<rect x="329" y="60.0" width="3" height="2.0" fill="url(#cbody)"/>
<line x1="335.5" y1="51.2" x2="335.5" y2="63.7" stroke="#ec8640"/>
<rect x="334" y="53.7" width="3" height="6.6" fill="url(#cbody)"/>
<line x1="339.5" y1="38.7" x2="339.5" y2="53.7" stroke="#ec8640"/>
<rect x="338" y="42.0" width="3" height="10.8" fill="url(#cbody)"/>
<line x1="344.5" y1="39.5" x2="344.5" y2="63.7" stroke="#ec8640"/>
<rect x="343.5" y="41.2" width="2" height="13.3" fill="#39404a" stroke="#ec8640"/>
<line x1="348.5" y1="51.2" x2="348.5" y2="81.2" stroke="#ec8640"/>
<rect x="347.5" y="53.7" width="2" height="16.6" fill="#39404a" stroke="#ec8640"/>
<line x1="353.5" y1="60.3" x2="353.5" y2="96.2" stroke="#ec8640"/>
<rect x="352.5" y="70.3" width="2" height="24.2" fill="#39404a" stroke="#ec8640"/>
<line x1="357.5" y1="82.0" x2="357.5" y2="97.8" stroke="#ec8640"/>
<rect x="356.5" y="90.3" width="2" height="2.5" fill="#39404a" stroke="#ec8640"/>
<line x1="362.5" y1="82.0" x2="362.5" y2="92.8" stroke="#ec8640"/>
<rect x="361" y="86.2" width="3" height="3.3" fill="url(#cbody)"/>
<line x1="366.5" y1="81.2" x2="366.5" y2="92.8" stroke="#ec8640"/>
<rect x="365.5" y="85.3" width="2" height="6.7" fill="#39404a" stroke="#ec8640"/>
<line x1="371.5" y1="87.0" x2="371.5" y2="108.7" stroke="#ec8640"/>
<rect x="370.5" y="90.3" width="2" height="17.5" fill="#39404a" stroke="#ec8640"/>
<line x1="375.5" y1="102.8" x2="375.5" y2="129.5" stroke="#ec8640"/>
<rect x="374.5" y="107.0" width="2" height="13.3" fill="#39404a" stroke="#ec8640"/>
<line x1="380.5" y1="80.3" x2="380.5" y2="121.2" stroke="#ec8640"/>
<rect x="379" y="89.5" width="3" height="26.7" fill="url(#cbody)"/>
<line x1="384.5" y1="84.5" x2="384.5" y2="100.3" stroke="#ec8640"/>
<rect x="383.5" y="87.8" width="2" height="11.7" fill="#39404a" stroke="#ec8640"/>
<line x1="388.5" y1="87.0" x2="388.5" y2="99.5" stroke="#ec8640"/>
<rect x="387" y="95.0" width="3" height="2.0" fill="url(#cbody)"/>
<line x1="393.5" y1="87.0" x2="393.5" y2="98.7" stroke="#ec8640"/>
<rect x="392" y="94.0" width="3" height="2.0" fill="url(#cbody)"/>
<line x1="397.5" y1="80.3" x2="397.5" y2="102.8" stroke="#ec8640"/>
<rect x="396" y="84.5" width="3" height="10.0" fill="url(#cbody)"/>
<line x1="402.5" y1="57.8" x2="402.5" y2="87.0" stroke="#ec8640"/>
<rect x="401" y="67.0" width="3" height="15.8" fill="url(#cbody)"/>
<line x1="406.5" y1="58.7" x2="406.5" y2="82.0" stroke="#ec8640"/>
<rect x="405.5" y="66.2" width="2" height="10.0" fill="#39404a" stroke="#ec8640"/>
<line x1="411.5" y1="64.5" x2="411.5" y2="79.5" stroke="#ec8640"/>
<rect x="410" y="71.2" width="3" height="3.3" fill="url(#cbody)"/>
<line x1="415.5" y1="62.0" x2="415.5" y2="76.2" stroke="#ec8640"/>
<rect x="414.5" y="70.3" width="2" height="3.4" fill="#39404a" stroke="#ec8640"/>
<line x1="420.5" y1="63.7" x2="420.5" y2="76.2" stroke="#ec8640"/>
<rect x="419" y="69.0" width="3" height="2.0" fill="url(#cbody)"/>
<line x1="424.5" y1="68.7" x2="424.5" y2="88.7" stroke="#ec8640"/>
<rect x="423.5" y="72.0" width="2" height="6.7" fill="#39404a" stroke="#ec8640"/>
<line x1="429.5" y1="71.2" x2="429.5" y2="95.3" stroke="#ec8640"/>
<rect x="428.5" y="77.8" width="2" height="7.5" fill="#39404a" stroke="#ec8640"/>
<line x1="433.5" y1="82.0" x2="433.5" y2="122.8" stroke="#ec8640"/>
<rect x="432.5" y="85.3" width="2" height="33.4" fill="#39404a" stroke="#ec8640"/>
<line x1="438.5" y1="103.7" x2="438.5" y2="120.3" stroke="#ec8640"/>
<rect x="437" y="113.7" width="3" height="4.1" fill="url(#cbody)"/>
<line x1="442.5" y1="88.7" x2="442.5" y2="114.5" stroke="#ec8640"/>
<rect x="441" y="101.2" width="3" height="11.6" fill="url(#cbody)"/>
<line x1="447.5" y1="93.7" x2="447.5" y2="112.0" stroke="#ec8640"/>
<rect x="446.5" y="99.5" width="2" height="11.7" fill="#39404a" stroke="#ec8640"/>
<line x1="451.5" y1="106.2" x2="451.5" y2="125.3" stroke="#ec8640"/>
<rect x="450.5" y="108.7" width="2" height="11.6" fill="#39404a" stroke="#ec8640"/>
<line x1="455.5" y1="110.0" x2="455.5" y2="140.0" stroke="#ec8640"/>
<rect x="454.5" y="120.3" width="2" height="18.9" fill="#39404a" stroke="#ec8640"/>
<line x1="460.5" y1="122.5" x2="460.5" y2="143.3" stroke="#ec8640"/>
<rect x="459.5" y="130.8" width="2" height="4.2" fill="#39404a" stroke="#ec8640"/>
<line x1="464.5" y1="125.8" x2="464.5" y2="144.2" stroke="#ec8640"/>
<rect x="463.5" y="135.0" width="2" height="5.8" fill="#39404a" stroke="#ec8640"/>
<line x1="469.5" y1="134.2" x2="469.5" y2="149.2" stroke="#ec8640"/>
<rect x="468" y="138.0" width="3" height="2.0" fill="url(#cbody)"/>
<line x1="473.5" y1="131.7" x2="473.5" y2="141.7" stroke="#ec8640"/>
<rect x="472" y="135.8" width="3" height="1.7" fill="url(#cbody)"/>
<line x1="478.5" y1="130.0" x2="478.5" y2="146.7" stroke="#ec8640"/>
<rect x="477" y="137.0" width="3" height="2.0" fill="url(#cbody)"/>
<line x1="482.5" y1="132.5" x2="482.5" y2="153.3" stroke="#ec8640"/>
<rect x="481.5" y="135.8" width="2" height="2.5" fill="#39404a" stroke="#ec8640"/>
<line x1="487.5" y1="133.3" x2="487.5" y2="156.7" stroke="#ec8640"/>
<rect x="486.5" y="138.3" width="2" height="6.7" fill="#39404a" stroke="#ec8640"/>
<line x1="491.5" y1="138.3" x2="491.5" y2="148.3" stroke="#ec8640"/>
<rect x="490" y="143.3" width="3" height="1.7" fill="url(#cbody)"/>
<line x1="496.5" y1="140.0" x2="496.5" y2="148.3" stroke="#ec8640"/>
<rect x="495" y="143.0" width="3" height="2.0" fill="url(#cbody)"/>
<line x1="500.5" y1="138.3" x2="500.5" y2="149.2" stroke="#ec8640"/>
<rect x="499" y="144.0" width="3" height="2.0" fill="url(#cbody)"/>
<line x1="505.5" y1="139.2" x2="505.5" y2="156.7" stroke="#ec8640"/>
<rect x="504.5" y="143.3" width="2" height="7.5" fill="#39404a" stroke="#ec8640"/>
<line x1="509.5" y1="148.3" x2="509.5" y2="163.3" stroke="#ec8640"/>
<rect x="508" y="150.0" width="3" height="1.7" fill="url(#cbody)"/>
<line x1="514.5" y1="131.7" x2="514.5" y2="162.5" stroke="#ec8640"/>
<rect x="513" y="135.0" width="3" height="15.0" fill="url(#cbody)"/>
<line x1="518.5" y1="122.5" x2="518.5" y2="136.7" stroke="#ec8640"/>
<rect x="517" y="133.3" width="3" height="2.5" fill="url(#cbody)"/>
<line x1="522.5" y1="130.8" x2="522.5" y2="137.5" stroke="#ec8640"/>
<rect x="521.5" y="132.5" width="2" height="1.7" fill="#39404a" stroke="#ec8640"/>
<line x1="527.5" y1="122.5" x2="527.5" y2="136.7" stroke="#ec8640"/>
<rect x="526" y="129.2" width="3" height="3.3" fill="url(#cbody)"/>
<line x1="531.5" y1="121.7" x2="531.5" y2="133.3" stroke="#ec8640"/>
<rect x="530" y="127.0" width="3" height="2.0" fill="url(#cbody)"/>
<line x1="536.5" y1="122.5" x2="536.5" y2="140.8" stroke="#ec8640"/>
<rect x="535.5" y="126.7" width="2" height="2.5" fill="#39404a" stroke="#ec8640"/>
<line x1="540.5" y1="108.3" x2="540.5" y2="136.7" stroke="#ec8640"/>
<rect x="539" y="120.0" width="3" height="7.5" fill="url(#cbody)"/>
<line x1="545.5" y1="110.0" x2="545.5" y2="121.7" stroke="#ec8640"/>
<rect x="544" y="117.0" width="3" height="2.0" fill="url(#cbody)"/>
<line x1="549.5" y1="110.8" x2="549.5" y2="123.3" stroke="#ec8640"/>
<rect x="548" y="116.0" width="3" height="2.0" fill="url(#cbody)"/>
<line x1="554.5" y1="113.3" x2="554.5" y2="124.2" stroke="#ec8640"/>
<rect x="553.5" y="117.5" width="2" height="1.7" fill="#39404a" stroke="#ec8640"/>
<line x1="558.5" y1="110.0" x2="558.5" y2="123.3" stroke="#ec8640"/>
<rect x="557" y="117.0" width="3" height="2.0" fill="url(#cbody)"/>
<line x1="563.5" y1="117.5" x2="563.5" y2="135.0" stroke="#ec8640"/>
<rect x="562.5" y="119.2" width="2" height="15.0" fill="#39404a" stroke="#ec8640"/>
<line x1="567.5" y1="122.5" x2="567.5" y2="147.5" stroke="#ec8640"/>
<rect x="566" y="127.5" width="3" height="5.0" fill="url(#cbody)"/>
<line x1="572.5" y1="120.0" x2="572.5" y2="125.0" stroke="#ec8640"/>
<rect x="571" y="123.5" width="3" height="1.5" fill="url(#cbody)"/>
<line x1="576.5" y1="121.7" x2="576.5" y2="130.8" stroke="#ec8640"/>
<rect x="575" y="124.0" width="3" height="2.0" fill="url(#cbody)"/>
<line x1="581.5" y1="120.0" x2="581.5" y2="126.7" stroke="#ec8640"/>
<rect x="580.5" y="123.3" width="2" height="1.7" fill="#39404a" stroke="#ec8640"/>
<line x1="585.5" y1="117.5" x2="585.5" y2="135.0" stroke="#ec8640"/>
<rect x="584" y="121.7" width="3" height="1.6" fill="url(#cbody)"/>
<line x1="589.5" y1="100.0" x2="589.5" y2="130.0" stroke="#ec8640"/>
<rect x="588" y="115.0" width="3" height="6.7" fill="url(#cbody)"/>
<line x1="594.5" y1="93.3" x2="594.5" y2="116.7" stroke="#ec8640"/>
<rect x="593" y="100.0" width="3" height="14.2" fill="url(#cbody)"/>
<line x1="598.5" y1="95.0" x2="598.5" y2="110.8" stroke="#ec8640"/>
<rect x="597.5" y="100.0" width="2" height="5.0" fill="#39404a" stroke="#ec8640"/>
<line x1="603.5" y1="98.3" x2="603.5" y2="110.8" stroke="#ec8640"/>
<rect x="602" y="103.0" width="3" height="2.0" fill="url(#cbody)"/>
<line x1="607.5" y1="100.0" x2="607.5" y2="109.2" stroke="#ec8640"/>
<rect x="606.5" y="103.3" width="2" height="3.4" fill="#39404a" stroke="#ec8640"/>
<line x1="612.5" y1="93.3" x2="612.5" y2="112.5" stroke="#ec8640"/>
<rect x="611" y="102.5" width="3" height="3.3" fill="url(#cbody)"/>
<line x1="616.5" y1="86.7" x2="616.5" y2="108.3" stroke="#ec8640"/>
<rect x="615" y="94.2" width="3" height="6.6" fill="url(#cbody)"/>
<line x1="621.5" y1="88.3" x2="621.5" y2="127.5" stroke="#ec8640"/>
<rect x="620.5" y="93.3" width="2" height="31.7" fill="#39404a" stroke="#ec8640"/>
<line x1="625.5" y1="114.2" x2="625.5" y2="126.7" stroke="#ec8640"/>
<rect x="624" y="117.5" width="3" height="6.7" fill="url(#cbody)"/>
<line x1="630.5" y1="114.2" x2="630.5" y2="123.3" stroke="#ec8640"/>
<rect x="629" y="118.0" width="3" height="2.0" fill="url(#cbody)"/>
<line x1="634.5" y1="110.8" x2="634.5" y2="125.8" stroke="#ec8640"/>
<rect x="633.5" y="116.7" width="2" height="6.6" fill="#39404a" stroke="#ec8640"/>
<line x1="639.5" y1="112.5" x2="639.5" y2="123.3" stroke="#ec8640"/>
<rect x="638" y="117.0" width="3" height="2.0" fill="url(#cbody)"/>
<line x1="643.5" y1="115.8" x2="643.5" y2="145.8" stroke="#ec8640"/>
<rect x="642.5" y="118.3" width="2" height="25.9" fill="#39404a" stroke="#ec8640"/>
<line x1="648.5" y1="138.3" x2="648.5" y2="162.5" stroke="#ec8640"/>
<rect x="647.5" y="142.5" width="2" height="15.0" fill="#39404a" stroke="#ec8640"/>
<line x1="652.5" y1="152.5" x2="652.5" y2="161.7" stroke="#ec8640"/>
<rect x="651.5" y="157.5" width="2" height="3.3" fill="#39404a" stroke="#ec8640"/>
<line x1="656.5" y1="149.2" x2="656.5" y2="159.2" stroke="#ec8640"/>
<rect x="655" y="154.0" width="3" height="2.0" fill="url(#cbody)"/>
<line x1="661.5" y1="149.2" x2="661.5" y2="157.5" stroke="#ec8640"/>
<rect x="660" y="153.0" width="3" height="2.0" fill="url(#cbody)"/>
<line x1="665.5" y1="145.8" x2="665.5" y2="161.7" stroke="#ec8640"/>
<rect x="664.5" y="153.3" width="2" height="7.5" fill="#39404a" stroke="#ec8640"/>
<line x1="670.5" y1="155.0" x2="670.5" y2="166.7" stroke="#ec8640"/>
<rect x="669.5" y="160.8" width="2" height="3.4" fill="#39404a" stroke="#ec8640"/>
<line x1="674.5" y1="160.8" x2="674.5" y2="170.8" stroke="#ec8640"/>
<rect x="673" y="163.0" width="3" height="2.0" fill="url(#cbody)"/>
<line x1="679.5" y1="150.0" x2="679.5" y2="166.7" stroke="#ec8640"/>
<rect x="678" y="152.5" width="3" height="10.8" fill="url(#cbody)"/>
<line x1="683.5" y1="148.3" x2="683.5" y2="159.2" stroke="#ec8640"/>
<rect x="682.5" y="151.7" width="2" height="5.0" fill="#39404a" stroke="#ec8640"/>
<line x1="688.5" y1="148.3" x2="688.5" y2="160.0" stroke="#ec8640"/>
<rect x="687" y="152.5" width="3" height="2.5" fill="url(#cbody)"/>
<line x1="692.5" y1="148.3" x2="692.5" y2="162.5" stroke="#ec8640"/>
<rect x="691.5" y="150.8" width="2" height="8.4" fill="#39404a" stroke="#ec8640"/>
<line x1="697.5" y1="139.2" x2="697.5" y2="163.3" stroke="#ec8640"/>
<rect x="696" y="144.2" width="3" height="13.3" fill="url(#cbody)"/>
<line x1="701.5" y1="133.3" x2="701.5" y2="160.0" stroke="#ec8640"/>
<rect x="700.5" y="143.3" width="2" height="9.2" fill="#39404a" stroke="#ec8640"/>
<line x1="706.5" y1="150.0" x2="706.5" y2="162.5" stroke="#ec8640"/>
<rect x="705.5" y="151.7" width="2" height="10.0" fill="#39404a" stroke="#ec8640"/>
<line x1="710.5" y1="157.5" x2="710.5" y2="167.5" stroke="#ec8640"/>
<rect x="709.5" y="160.0" width="2" height="5.8" fill="#39404a" stroke="#ec8640"/>
<line x1="715.5" y1="162.5" x2="715.5" y2="170.8" stroke="#ec8640"/>
<rect x="714" y="164.0" width="3" height="2.0" fill="url(#cbody)"/>
<line x1="719.5" y1="159.2" x2="719.5" y2="172.5" stroke="#ec8640"/>
<rect x="718" y="164.0" width="3" height="2.0" fill="url(#cbody)"/>
<line x1="723.5" y1="153.3" x2="723.5" y2="170.8" stroke="#ec8640"/>
<rect x="722" y="164.0" width="3" height="2.0" fill="url(#cbody)"/>
<line x1="728.5" y1="150.0" x2="728.5" y2="176.7" stroke="#ec8640"/>
<rect x="727" y="151.0" width="3" height="2.0" fill="url(#cbody)"/>
<line x1="732.5" y1="153.3" x2="732.5" y2="165.0" stroke="#ec8640"/>
<rect x="731" y="156.7" width="3" height="5.0" fill="url(#cbody)"/>
<line x1="737.5" y1="148.3" x2="737.5" y2="167.5" stroke="#ec8640"/>
<rect x="736.5" y="155.8" width="2" height="3.4" fill="#39404a" stroke="#ec8640"/>
<line x1="741.5" y1="155.8" x2="741.5" y2="167.5" stroke="#ec8640"/>
<rect x="740.5" y="159.2" width="2" height="4.1" fill="#39404a" stroke="#ec8640"/>
<line x1="746.5" y1="154.2" x2="746.5" y2="167.5" stroke="#ec8640"/>
<rect x="745" y="162.0" width="3" height="2.0" fill="url(#cbody)"/>
<line x1="750.5" y1="151.7" x2="750.5" y2="169.0" stroke="#ec8640"/>
<rect x="749" y="160.0" width="3" height="3.0" fill="url(#cbody)"/>
<line x1="755.5" y1="138.3" x2="755.5" y2="205.2" stroke="#ec8640"/>
<rect x="754.5" y="162.7" width="2" height="37.9" fill="#39404a" stroke="#ec8640"/>
<line x1="759.5" y1="185.1" x2="759.5" y2="203.6" stroke="#ec8640"/>
<rect x="758" y="189.0" width="3" height="10.8" fill="url(#cbody)"/>
<line x1="764.5" y1="182.0" x2="764.5" y2="192.8" stroke="#ec8640"/>
<rect x="763.5" y="188.2" width="2" height="3.1" fill="#39404a" stroke="#ec8640"/>
<line x1="768.5" y1="186.7" x2="768.5" y2="195.9" stroke="#ec8640"/>
<rect x="767.5" y="191.3" width="2" height="3.9" fill="#39404a" stroke="#ec8640"/>
<line x1="773.5" y1="179.0" x2="773.5" y2="200.6" stroke="#ec8640"/>
<rect x="772.5" y="193.6" width="2" height="3.1" fill="#39404a" stroke="#ec8640"/>
<line x1="777.5" y1="189.0" x2="777.5" y2="215.2" stroke="#ec8640"/>
<rect x="776.5" y="196.0" width="2" height="17.7" fill="#39404a" stroke="#ec8640"/>
<line x1="782.5" y1="199.0" x2="782.5" y2="219.8" stroke="#ec8640"/>
<rect x="781.5" y="212.1" width="2" height="2.3" fill="#39404a" stroke="#ec8640"/>
<line x1="786.5" y1="205.2" x2="786.5" y2="217.5" stroke="#ec8640"/>
<rect x="785" y="208.3" width="3" height="5.4" fill="url(#cbody)"/>
<line x1="790.5" y1="203.6" x2="790.5" y2="214.4" stroke="#ec8640"/>
<rect x="789" y="208.3" width="3" height="1.5" fill="url(#cbody)"/>
<line x1="795.5" y1="202.9" x2="795.5" y2="213.7" stroke="#ec8640"/>
<rect x="794.5" y="206.7" width="2" height="4.7" fill="#39404a" stroke="#ec8640"/>
<line x1="799.5" y1="201.3" x2="799.5" y2="214.4" stroke="#ec8640"/>
<rect x="798" y="209.0" width="3" height="2.0" fill="url(#cbody)"/>
<line x1="804.5" y1="209.0" x2="804.5" y2="221.4" stroke="#ec8640"/>
<rect x="803.5" y="210.6" width="2" height="4.6" fill="#39404a" stroke="#ec8640"/>
<line x1="808.5" y1="206.0" x2="808.5" y2="229.1" stroke="#ec8640"/>
<rect x="807.5" y="215.2" width="2" height="5.4" fill="#39404a" stroke="#ec8640"/>
<line x1="813.5" y1="216.8" x2="813.5" y2="227.6" stroke="#ec8640"/>
<rect x="812" y="220.6" width="3" height="1.6" fill="url(#cbody)"/>
<line x1="817.5" y1="215.2" x2="817.5" y2="222.2" stroke="#ec8640"/>
<rect x="816" y="218.0" width="3" height="2.0" fill="url(#cbody)"/>
<line x1="822.5" y1="212.1" x2="822.5" y2="222.2" stroke="#ec8640"/>
<rect x="821" y="216.5" width="3" height="2.0" fill="url(#cbody)"/>
<line x1="826.5" y1="212.9" x2="826.5" y2="226.0" stroke="#ec8640"/>
<rect x="825.5" y="216.0" width="2" height="2.3" fill="#39404a" stroke="#ec8640"/>
<line x1="831.5" y1="214.4" x2="831.5" y2="233.7" stroke="#ec8640"/>
<rect x="830.5" y="218.3" width="2" height="11.6" fill="#39404a" stroke="#ec8640"/>
<line x1="835.5" y1="224.5" x2="835.5" y2="238.4" stroke="#ec8640"/>
<rect x="834" y="228.0" width="3" height="2.0" fill="url(#cbody)"/>
<line x1="840.5" y1="215.2" x2="840.5" y2="234.5" stroke="#ec8640"/>
<rect x="839" y="216.8" width="3" height="11.5" fill="url(#cbody)"/>
<line x1="844.5" y1="209.0" x2="844.5" y2="220.6" stroke="#ec8640"/>
<rect x="843" y="215.0" width="3" height="2.0" fill="url(#cbody)"/>
<line x1="849.5" y1="214.4" x2="849.5" y2="226.8" stroke="#ec8640"/>
<rect x="848.5" y="216.0" width="2" height="6.9" fill="#39404a" stroke="#ec8640"/>
<line x1="853.5" y1="219.1" x2="853.5" y2="234.5" stroke="#ec8640"/>
<rect x="852.5" y="222.9" width="2" height="10.1" fill="#39404a" stroke="#ec8640"/>
<line x1="857.5" y1="228.3" x2="857.5" y2="241.5" stroke="#ec8640"/>
<rect x="856.5" y="233.0" width="2" height="4.6" fill="#39404a" stroke="#ec8640"/>
<line x1="862.5" y1="225.2" x2="862.5" y2="243.0" stroke="#ec8640"/>
<rect x="861" y="233.7" width="3" height="2.3" fill="url(#cbody)"/>
<line x1="866.5" y1="215.2" x2="866.5" y2="238.4" stroke="#ec8640"/>
<rect x="865" y="229.0" width="3" height="3.0" fill="url(#cbody)"/>
<line x1="871.5" y1="216.8" x2="871.5" y2="234.5" stroke="#ec8640"/>
<rect x="870" y="222.2" width="3" height="6.9" fill="url(#cbody)"/>
<line x1="875.5" y1="219.1" x2="875.5" y2="226.8" stroke="#ec8640"/>
<rect x="874" y="222.0" width="3" height="1.5" fill="url(#cbody)"/>
</g>
<text x="16.5" y="49.3" textLength="134" lengthAdjust="spacingAndGlyphs" style="font-size:12px;fill:#1a1ae0">Exponential_Moving_Average</text>
<text x="155.6" y="49.3" textLength="134" lengthAdjust="spacingAndGlyphs" style="font-size:12px;fill:#e0201c">Exponential_Moving_Average</text>
<rect x="15" y="37" width="31" height="22" fill="#f2f2f2"/>
<rect x="15" y="37" width="31" height="5" fill="#d9d9d9"/>
<rect x="19.5" y="45.5" width="9.5" height="9.5" rx="1.8" fill="#e23a3a" stroke="#9c1c1c"/>
<rect x="32.5" y="45.5" width="9.5" height="9.5" rx="1.8" fill="#2c9ee0" stroke="#1b5e9e"/>
<g clip-path="url(#cmacd)">
<text x="17.8" y="269.8" textLength="28" lengthAdjust="spacingAndGlyphs" style="font-size:10px;fill:#1c1c80">MACD</text>
<line x1="18.5" y1="296.5" x2="18.5" y2="291.5" stroke="#aa2430" stroke-width="2"/>
<line x1="22.5" y1="296.5" x2="22.5" y2="290.1" stroke="#aa2430" stroke-width="2"/>
<line x1="27.5" y1="296.5" x2="27.5" y2="289.8" stroke="#aa2430" stroke-width="2"/>
<line x1="31.5" y1="296.5" x2="31.5" y2="289.7" stroke="#aa2430" stroke-width="2"/>
<line x1="36.5" y1="296.5" x2="36.5" y2="290.0" stroke="#aa2430" stroke-width="2"/>
<line x1="40.5" y1="296.5" x2="40.5" y2="292.2" stroke="#aa2430" stroke-width="2"/>
<line x1="45.5" y1="296.5" x2="45.5" y2="293.4" stroke="#aa2430" stroke-width="2"/>
<line x1="49.5" y1="296.5" x2="49.5" y2="292.3" stroke="#aa2430" stroke-width="2"/>
<line x1="53.5" y1="296.5" x2="53.5" y2="290.3" stroke="#aa2430" stroke-width="2"/>
<line x1="58.5" y1="296.5" x2="58.5" y2="289.1" stroke="#aa2430" stroke-width="2"/>
<line x1="62.5" y1="296.5" x2="62.5" y2="288.8" stroke="#aa2430" stroke-width="2"/>
<line x1="67.5" y1="296.5" x2="67.5" y2="293.0" stroke="#aa2430" stroke-width="2"/>
<line x1="76.5" y1="296.5" x2="76.5" y2="298.8" stroke="#aa2430" stroke-width="2"/>
<line x1="80.5" y1="296.5" x2="80.5" y2="300.3" stroke="#aa2430" stroke-width="2"/>
<line x1="85.5" y1="296.5" x2="85.5" y2="301.5" stroke="#aa2430" stroke-width="2"/>
<line x1="89.5" y1="296.5" x2="89.5" y2="301.7" stroke="#aa2430" stroke-width="2"/>
<line x1="94.5" y1="296.5" x2="94.5" y2="301.2" stroke="#aa2430" stroke-width="2"/>
<line x1="98.5" y1="296.5" x2="98.5" y2="301.1" stroke="#aa2430" stroke-width="2"/>
<line x1="103.5" y1="296.5" x2="103.5" y2="301.0" stroke="#aa2430" stroke-width="2"/>
<line x1="107.5" y1="296.5" x2="107.5" y2="300.9" stroke="#aa2430" stroke-width="2"/>
<line x1="112.5" y1="296.5" x2="112.5" y2="300.6" stroke="#aa2430" stroke-width="2"/>
<line x1="116.5" y1="296.5" x2="116.5" y2="299.0" stroke="#aa2430" stroke-width="2"/>
<line x1="120.5" y1="296.5" x2="120.5" y2="299.0" stroke="#aa2430" stroke-width="2"/>
<line x1="125.5" y1="296.5" x2="125.5" y2="298.9" stroke="#aa2430" stroke-width="2"/>
<line x1="129.5" y1="296.5" x2="129.5" y2="299.4" stroke="#aa2430" stroke-width="2"/>
<line x1="134.5" y1="296.5" x2="134.5" y2="300.2" stroke="#aa2430" stroke-width="2"/>
<line x1="138.5" y1="296.5" x2="138.5" y2="300.9" stroke="#aa2430" stroke-width="2"/>
<line x1="143.5" y1="296.5" x2="143.5" y2="301.9" stroke="#aa2430" stroke-width="2"/>
<line x1="147.5" y1="296.5" x2="147.5" y2="302.8" stroke="#aa2430" stroke-width="2"/>
<line x1="152.5" y1="296.5" x2="152.5" y2="303.0" stroke="#aa2430" stroke-width="2"/>
<line x1="156.5" y1="296.5" x2="156.5" y2="303.3" stroke="#aa2430" stroke-width="2"/>
<line x1="161.5" y1="296.5" x2="161.5" y2="303.0" stroke="#aa2430" stroke-width="2"/>
<line x1="165.5" y1="296.5" x2="165.5" y2="302.2" stroke="#aa2430" stroke-width="2"/>
<line x1="170.5" y1="296.5" x2="170.5" y2="301.4" stroke="#aa2430" stroke-width="2"/>
<line x1="174.5" y1="296.5" x2="174.5" y2="300.6" stroke="#aa2430" stroke-width="2"/>
<line x1="179.5" y1="296.5" x2="179.5" y2="299.8" stroke="#aa2430" stroke-width="2"/>
<line x1="183.5" y1="296.5" x2="183.5" y2="299.7" stroke="#aa2430" stroke-width="2"/>
<line x1="187.5" y1="296.5" x2="187.5" y2="300.1" stroke="#aa2430" stroke-width="2"/>
<line x1="192.5" y1="296.5" x2="192.5" y2="300.4" stroke="#aa2430" stroke-width="2"/>
<line x1="196.5" y1="296.5" x2="196.5" y2="302.2" stroke="#aa2430" stroke-width="2"/>
<line x1="201.5" y1="296.5" x2="201.5" y2="304.3" stroke="#aa2430" stroke-width="2"/>
<line x1="205.5" y1="296.5" x2="205.5" y2="305.9" stroke="#aa2430" stroke-width="2"/>
<line x1="210.5" y1="296.5" x2="210.5" y2="305.5" stroke="#aa2430" stroke-width="2"/>
<line x1="214.5" y1="296.5" x2="214.5" y2="305.1" stroke="#aa2430" stroke-width="2"/>
<line x1="219.5" y1="296.5" x2="219.5" y2="304.4" stroke="#aa2430" stroke-width="2"/>
<line x1="223.5" y1="296.5" x2="223.5" y2="303.7" stroke="#aa2430" stroke-width="2"/>
<line x1="228.5" y1="296.5" x2="228.5" y2="301.8" stroke="#aa2430" stroke-width="2"/>
<line x1="232.5" y1="296.5" x2="232.5" y2="299.9" stroke="#aa2430" stroke-width="2"/>
<line x1="237.5" y1="296.5" x2="237.5" y2="298.8" stroke="#aa2430" stroke-width="2"/>
<line x1="241.5" y1="296.5" x2="241.5" y2="298.2" stroke="#aa2430" stroke-width="2"/>
<line x1="246.5" y1="296.5" x2="246.5" y2="297.4" stroke="#aa2430" stroke-width="2"/>
<line x1="259.5" y1="296.5" x2="259.5" y2="295.7" stroke="#aa2430" stroke-width="2"/>
<line x1="263.5" y1="296.5" x2="263.5" y2="294.4" stroke="#aa2430" stroke-width="2"/>
<line x1="268.5" y1="296.5" x2="268.5" y2="293.7" stroke="#aa2430" stroke-width="2"/>
<line x1="272.5" y1="296.5" x2="272.5" y2="292.8" stroke="#aa2430" stroke-width="2"/>
<line x1="277.5" y1="296.5" x2="277.5" y2="291.9" stroke="#aa2430" stroke-width="2"/>
<line x1="281.5" y1="296.5" x2="281.5" y2="289.8" stroke="#aa2430" stroke-width="2"/>
<line x1="286.5" y1="296.5" x2="286.5" y2="286.3" stroke="#aa2430" stroke-width="2"/>
<line x1="290.5" y1="296.5" x2="290.5" y2="284.9" stroke="#aa2430" stroke-width="2"/>
<line x1="295.5" y1="296.5" x2="295.5" y2="284.3" stroke="#aa2430" stroke-width="2"/>
<line x1="299.5" y1="296.5" x2="299.5" y2="283.7" stroke="#aa2430" stroke-width="2"/>
<line x1="304.5" y1="296.5" x2="304.5" y2="282.4" stroke="#aa2430" stroke-width="2"/>
<line x1="308.5" y1="296.5" x2="308.5" y2="282.1" stroke="#aa2430" stroke-width="2"/>
<line x1="313.5" y1="296.5" x2="313.5" y2="282.9" stroke="#aa2430" stroke-width="2"/>
<line x1="317.5" y1="296.5" x2="317.5" y2="283.3" stroke="#aa2430" stroke-width="2"/>
<line x1="321.5" y1="296.5" x2="321.5" y2="284.6" stroke="#aa2430" stroke-width="2"/>
<line x1="326.5" y1="296.5" x2="326.5" y2="287.0" stroke="#aa2430" stroke-width="2"/>
<line x1="330.5" y1="296.5" x2="330.5" y2="289.3" stroke="#aa2430" stroke-width="2"/>
<line x1="335.5" y1="296.5" x2="335.5" y2="290.1" stroke="#aa2430" stroke-width="2"/>
<line x1="339.5" y1="296.5" x2="339.5" y2="290.8" stroke="#aa2430" stroke-width="2"/>
<line x1="344.5" y1="296.5" x2="344.5" y2="294.7" stroke="#aa2430" stroke-width="2"/>
<line x1="353.5" y1="296.5" x2="353.5" y2="299.0" stroke="#aa2430" stroke-width="2"/>
<line x1="357.5" y1="296.5" x2="357.5" y2="301.2" stroke="#aa2430" stroke-width="2"/>
<line x1="362.5" y1="296.5" x2="362.5" y2="302.8" stroke="#aa2430" stroke-width="2"/>
<line x1="366.5" y1="296.5" x2="366.5" y2="305.1" stroke="#aa2430" stroke-width="2"/>
<line x1="371.5" y1="296.5" x2="371.5" y2="307.8" stroke="#aa2430" stroke-width="2"/>
<line x1="375.5" y1="296.5" x2="375.5" y2="309.6" stroke="#aa2430" stroke-width="2"/>
<line x1="380.5" y1="296.5" x2="380.5" y2="309.0" stroke="#aa2430" stroke-width="2"/>
<line x1="384.5" y1="296.5" x2="384.5" y2="308.3" stroke="#aa2430" stroke-width="2"/>
<line x1="388.5" y1="296.5" x2="388.5" y2="306.8" stroke="#aa2430" stroke-width="2"/>
<line x1="393.5" y1="296.5" x2="393.5" y2="305.2" stroke="#aa2430" stroke-width="2"/>
<line x1="397.5" y1="296.5" x2="397.5" y2="303.6" stroke="#aa2430" stroke-width="2"/>
<line x1="402.5" y1="296.5" x2="402.5" y2="300.7" stroke="#aa2430" stroke-width="2"/>
<line x1="406.5" y1="296.5" x2="406.5" y2="299.2" stroke="#aa2430" stroke-width="2"/>
<line x1="411.5" y1="296.5" x2="411.5" y2="298.4" stroke="#aa2430" stroke-width="2"/>
<line x1="415.5" y1="296.5" x2="415.5" y2="297.8" stroke="#aa2430" stroke-width="2"/>
<line x1="424.5" y1="296.5" x2="424.5" y2="297.7" stroke="#aa2430" stroke-width="2"/>
<line x1="429.5" y1="296.5" x2="429.5" y2="298.7" stroke="#aa2430" stroke-width="2"/>
<line x1="433.5" y1="296.5" x2="433.5" y2="301.1" stroke="#aa2430" stroke-width="2"/>
<line x1="438.5" y1="296.5" x2="438.5" y2="302.9" stroke="#aa2430" stroke-width="2"/>
<line x1="442.5" y1="296.5" x2="442.5" y2="303.6" stroke="#aa2430" stroke-width="2"/>
<line x1="447.5" y1="296.5" x2="447.5" y2="304.5" stroke="#aa2430" stroke-width="2"/>
<line x1="451.5" y1="296.5" x2="451.5" y2="305.8" stroke="#aa2430" stroke-width="2"/>
<line x1="455.5" y1="296.5" x2="455.5" y2="307.0" stroke="#aa2430" stroke-width="2"/>
<line x1="460.5" y1="296.5" x2="460.5" y2="307.5" stroke="#aa2430" stroke-width="2"/>
<line x1="464.5" y1="296.5" x2="464.5" y2="307.8" stroke="#aa2430" stroke-width="2"/>
<line x1="469.5" y1="296.5" x2="469.5" y2="307.2" stroke="#aa2430" stroke-width="2"/>
<line x1="473.5" y1="296.5" x2="473.5" y2="305.9" stroke="#aa2430" stroke-width="2"/>
<line x1="478.5" y1="296.5" x2="478.5" y2="304.7" stroke="#aa2430" stroke-width="2"/>
<line x1="482.5" y1="296.5" x2="482.5" y2="303.6" stroke="#aa2430" stroke-width="2"/>
<line x1="487.5" y1="296.5" x2="487.5" y2="302.6" stroke="#aa2430" stroke-width="2"/>
<line x1="491.5" y1="296.5" x2="491.5" y2="301.8" stroke="#aa2430" stroke-width="2"/>
<line x1="496.5" y1="296.5" x2="496.5" y2="300.9" stroke="#aa2430" stroke-width="2"/>
<line x1="500.5" y1="296.5" x2="500.5" y2="300.2" stroke="#aa2430" stroke-width="2"/>
<line x1="505.5" y1="296.5" x2="505.5" y2="299.7" stroke="#aa2430" stroke-width="2"/>
<line x1="509.5" y1="296.5" x2="509.5" y2="298.9" stroke="#aa2430" stroke-width="2"/>
<line x1="522.5" y1="296.5" x2="522.5" y2="295.2" stroke="#aa2430" stroke-width="2"/>
<line x1="527.5" y1="296.5" x2="527.5" y2="294.2" stroke="#aa2430" stroke-width="2"/>
<line x1="531.5" y1="296.5" x2="531.5" y2="293.1" stroke="#aa2430" stroke-width="2"/>
<line x1="536.5" y1="296.5" x2="536.5" y2="292.5" stroke="#aa2430" stroke-width="2"/>
<line x1="540.5" y1="296.5" x2="540.5" y2="292.0" stroke="#aa2430" stroke-width="2"/>
<line x1="545.5" y1="296.5" x2="545.5" y2="291.4" stroke="#aa2430" stroke-width="2"/>
<line x1="549.5" y1="296.5" x2="549.5" y2="290.9" stroke="#aa2430" stroke-width="2"/>
<line x1="554.5" y1="296.5" x2="554.5" y2="291.2" stroke="#aa2430" stroke-width="2"/>
<line x1="558.5" y1="296.5" x2="558.5" y2="291.8" stroke="#aa2430" stroke-width="2"/>
<line x1="563.5" y1="296.5" x2="563.5" y2="292.4" stroke="#aa2430" stroke-width="2"/>
<line x1="567.5" y1="296.5" x2="567.5" y2="293.1" stroke="#aa2430" stroke-width="2"/>
<line x1="572.5" y1="296.5" x2="572.5" y2="293.6" stroke="#aa2430" stroke-width="2"/>
<line x1="576.5" y1="296.5" x2="576.5" y2="293.9" stroke="#aa2430" stroke-width="2"/>
<line x1="581.5" y1="296.5" x2="581.5" y2="294.2" stroke="#aa2430" stroke-width="2"/>
<line x1="585.5" y1="296.5" x2="585.5" y2="294.5" stroke="#aa2430" stroke-width="2"/>
<line x1="589.5" y1="296.5" x2="589.5" y2="294.2" stroke="#aa2430" stroke-width="2"/>
<line x1="594.5" y1="296.5" x2="594.5" y2="293.4" stroke="#aa2430" stroke-width="2"/>
<line x1="598.5" y1="296.5" x2="598.5" y2="293.0" stroke="#aa2430" stroke-width="2"/>
<line x1="603.5" y1="296.5" x2="603.5" y2="292.9" stroke="#aa2430" stroke-width="2"/>
<line x1="607.5" y1="296.5" x2="607.5" y2="292.6" stroke="#aa2430" stroke-width="2"/>
<line x1="612.5" y1="296.5" x2="612.5" y2="292.1" stroke="#aa2430" stroke-width="2"/>
<line x1="616.5" y1="296.5" x2="616.5" y2="292.2" stroke="#aa2430" stroke-width="2"/>
<line x1="621.5" y1="296.5" x2="621.5" y2="295.3" stroke="#aa2430" stroke-width="2"/>
<line x1="625.5" y1="296.5" x2="625.5" y2="297.7" stroke="#aa2430" stroke-width="2"/>
<line x1="630.5" y1="296.5" x2="630.5" y2="297.9" stroke="#aa2430" stroke-width="2"/>
<line x1="634.5" y1="296.5" x2="634.5" y2="298.2" stroke="#aa2430" stroke-width="2"/>
<line x1="639.5" y1="296.5" x2="639.5" y2="299.6" stroke="#aa2430" stroke-width="2"/>
<line x1="643.5" y1="296.5" x2="643.5" y2="302.2" stroke="#aa2430" stroke-width="2"/>
<line x1="648.5" y1="296.5" x2="648.5" y2="304.8" stroke="#aa2430" stroke-width="2"/>
<line x1="652.5" y1="296.5" x2="652.5" y2="305.8" stroke="#aa2430" stroke-width="2"/>
<line x1="656.5" y1="296.5" x2="656.5" y2="306.4" stroke="#aa2430" stroke-width="2"/>
<line x1="661.5" y1="296.5" x2="661.5" y2="306.4" stroke="#aa2430" stroke-width="2"/>
<line x1="665.5" y1="296.5" x2="665.5" y2="306.8" stroke="#aa2430" stroke-width="2"/>
<line x1="670.5" y1="296.5" x2="670.5" y2="304.5" stroke="#aa2430" stroke-width="2"/>
<line x1="674.5" y1="296.5" x2="674.5" y2="303.5" stroke="#aa2430" stroke-width="2"/>
<line x1="679.5" y1="296.5" x2="679.5" y2="301.3" stroke="#aa2430" stroke-width="2"/>
<line x1="683.5" y1="296.5" x2="683.5" y2="299.8" stroke="#aa2430" stroke-width="2"/>
<line x1="688.5" y1="296.5" x2="688.5" y2="299.4" stroke="#aa2430" stroke-width="2"/>
<line x1="692.5" y1="296.5" x2="692.5" y2="299.1" stroke="#aa2430" stroke-width="2"/>
<line x1="697.5" y1="296.5" x2="697.5" y2="297.9" stroke="#aa2430" stroke-width="2"/>
<line x1="755.5" y1="296.5" x2="755.5" y2="299.7" stroke="#aa2430" stroke-width="2"/>
<line x1="759.5" y1="296.5" x2="759.5" y2="299.9" stroke="#aa2430" stroke-width="2"/>
<line x1="764.5" y1="296.5" x2="764.5" y2="300.1" stroke="#aa2430" stroke-width="2"/>
<line x1="768.5" y1="296.5" x2="768.5" y2="301.0" stroke="#aa2430" stroke-width="2"/>
<line x1="773.5" y1="296.5" x2="773.5" y2="301.9" stroke="#aa2430" stroke-width="2"/>
<line x1="777.5" y1="296.5" x2="777.5" y2="302.8" stroke="#aa2430" stroke-width="2"/>
<line x1="782.5" y1="296.5" x2="782.5" y2="302.7" stroke="#aa2430" stroke-width="2"/>
<line x1="786.5" y1="296.5" x2="786.5" y2="301.6" stroke="#aa2430" stroke-width="2"/>
<line x1="790.5" y1="296.5" x2="790.5" y2="300.5" stroke="#aa2430" stroke-width="2"/>
<line x1="795.5" y1="296.5" x2="795.5" y2="300.0" stroke="#aa2430" stroke-width="2"/>
<line x1="799.5" y1="296.5" x2="799.5" y2="299.8" stroke="#aa2430" stroke-width="2"/>
<line x1="804.5" y1="296.5" x2="804.5" y2="299.5" stroke="#aa2430" stroke-width="2"/>
<line x1="808.5" y1="296.5" x2="808.5" y2="299.2" stroke="#aa2430" stroke-width="2"/>
<line x1="813.5" y1="296.5" x2="813.5" y2="298.9" stroke="#aa2430" stroke-width="2"/>
<line x1="817.5" y1="296.5" x2="817.5" y2="298.6" stroke="#aa2430" stroke-width="2"/>
<line x1="822.5" y1="296.5" x2="822.5" y2="297.4" stroke="#aa2430" stroke-width="2"/>
<line x1="831.5" y1="296.5" x2="831.5" y2="297.4" stroke="#aa2430" stroke-width="2"/>
<line x1="835.5" y1="296.5" x2="835.5" y2="297.4" stroke="#aa2430" stroke-width="2"/>
<line x1="844.5" y1="296.5" x2="844.5" y2="295.2" stroke="#aa2430" stroke-width="2"/>
<line x1="849.5" y1="296.5" x2="849.5" y2="295.5" stroke="#aa2430" stroke-width="2"/>
<line x1="866.5" y1="296.5" x2="866.5" y2="294.7" stroke="#aa2430" stroke-width="2"/>
<line x1="871.5" y1="296.5" x2="871.5" y2="293.8" stroke="#aa2430" stroke-width="2"/>
<line x1="875.5" y1="296.5" x2="875.5" y2="293.8" stroke="#aa2430" stroke-width="2"/>
<polyline points="15.9,287.5 23.5,281.8 35.0,277.0 42.6,278.5 47.4,277.0 52.2,272.2 61.7,267.1 64.6,267.5 71.3,274.1 86.6,281.8 101.9,283.7 111.4,285.0 115.2,283.3 126.7,284.3 138.1,288.5 147.7,293.2 159.2,297.1 182.1,299.0 193.5,300.9 205.0,308.5 214.5,312.3 224.1,314.3 234.0,312.3 241.5,311.4 254.8,309.5 268.2,303.7 279.7,298.0 293.0,283.7 306.4,270.3 319.8,263.6 331.2,263.3 339.8,261.3 348.4,265.5 363.7,277.0 375.2,288.5 386.6,293.2 398.0,292.7 405.7,290.0 421.0,288.1 428.6,289.4 436.3,296.1 446.0,300.9 455.5,307.6 467.0,314.3 484.2,317.1 509.0,317.1 526.2,310.4 551.0,299.9 564.4,298.4 587.3,296.1 596.9,292.3 604.5,290.4 616.0,286.9 623.6,290.8 637.0,293.2 648.4,303.7 656.1,307.6 662.0,309.5 673.5,314.3 681.1,312.3 692.6,311.8 700.2,309.9 734.6,308.5 749.9,307.2 755.6,311.4 763.2,312.9 780.4,320.0 803.3,320.9 818.6,321.3 826.2,319.0 833.9,320.0 843.4,316.7 862.5,316.7 874.0,312.3" fill="none" stroke="#12126a" stroke-width="1.2" stroke-linejoin="round"/>
<circle cx="18.2" cy="290.7" r="1.4" fill="#ea2028"/>
<circle cx="22.7" cy="288.9" r="1.4" fill="#ea2028"/>
<circle cx="27.1" cy="287.0" r="1.4" fill="#ea2028"/>
<circle cx="31.6" cy="285.2" r="1.4" fill="#ea2028"/>
<circle cx="36.1" cy="283.7" r="1.4" fill="#ea2028"/>
<circle cx="40.5" cy="282.4" r="1.4" fill="#ea2028"/>
<circle cx="45.0" cy="280.8" r="1.4" fill="#ea2028"/>
<circle cx="49.5" cy="279.1" r="1.4" fill="#ea2028"/>
<circle cx="53.9" cy="277.5" r="1.4" fill="#ea2028"/>
<circle cx="58.4" cy="276.2" r="1.4" fill="#ea2028"/>
<circle cx="62.9" cy="274.9" r="1.4" fill="#ea2028"/>
<circle cx="67.3" cy="273.7" r="1.4" fill="#ea2028"/>
<circle cx="71.8" cy="273.6" r="1.4" fill="#ea2028"/>
<circle cx="76.3" cy="274.3" r="1.4" fill="#ea2028"/>
<circle cx="80.7" cy="275.1" r="1.4" fill="#ea2028"/>
<circle cx="85.2" cy="276.1" r="1.4" fill="#ea2028"/>
<circle cx="89.7" cy="277.0" r="1.4" fill="#ea2028"/>
<circle cx="94.1" cy="278.0" r="1.4" fill="#ea2028"/>
<circle cx="98.6" cy="278.7" r="1.4" fill="#ea2028"/>
<circle cx="103.1" cy="279.4" r="1.4" fill="#ea2028"/>
<circle cx="107.5" cy="280.1" r="1.4" fill="#ea2028"/>
<circle cx="112.0" cy="280.6" r="1.4" fill="#ea2028"/>
<circle cx="116.5" cy="280.9" r="1.4" fill="#ea2028"/>
<circle cx="120.9" cy="281.3" r="1.4" fill="#ea2028"/>
<circle cx="125.4" cy="281.8" r="1.4" fill="#ea2028"/>
<circle cx="129.9" cy="282.6" r="1.4" fill="#ea2028"/>
<circle cx="134.3" cy="283.4" r="1.4" fill="#ea2028"/>
<circle cx="138.8" cy="284.4" r="1.4" fill="#ea2028"/>
<circle cx="143.3" cy="285.7" r="1.4" fill="#ea2028"/>
<circle cx="147.7" cy="286.9" r="1.4" fill="#ea2028"/>
<circle cx="152.2" cy="288.2" r="1.4" fill="#ea2028"/>
<circle cx="156.7" cy="289.5" r="1.4" fill="#ea2028"/>
<circle cx="161.1" cy="290.8" r="1.4" fill="#ea2028"/>
<circle cx="165.6" cy="292.0" r="1.4" fill="#ea2028"/>
<circle cx="170.1" cy="293.1" r="1.4" fill="#ea2028"/>
<circle cx="174.5" cy="294.3" r="1.4" fill="#ea2028"/>
<circle cx="179.0" cy="295.4" r="1.4" fill="#ea2028"/>
<circle cx="183.5" cy="296.0" r="1.4" fill="#ea2028"/>
<circle cx="187.9" cy="296.4" r="1.4" fill="#ea2028"/>
<circle cx="192.4" cy="296.8" r="1.4" fill="#ea2028"/>
<circle cx="196.9" cy="297.4" r="1.4" fill="#ea2028"/>
<circle cx="201.3" cy="298.3" r="1.4" fill="#ea2028"/>
<circle cx="205.8" cy="299.4" r="1.4" fill="#ea2028"/>
<circle cx="210.3" cy="301.6" r="1.4" fill="#ea2028"/>
<circle cx="214.7" cy="303.8" r="1.4" fill="#ea2028"/>
<circle cx="219.2" cy="305.4" r="1.4" fill="#ea2028"/>
<circle cx="223.7" cy="307.0" r="1.4" fill="#ea2028"/>
<circle cx="228.1" cy="308.1" r="1.4" fill="#ea2028"/>
<circle cx="232.6" cy="309.2" r="1.4" fill="#ea2028"/>
<circle cx="237.1" cy="309.6" r="1.4" fill="#ea2028"/>
<circle cx="241.5" cy="309.7" r="1.4" fill="#ea2028"/>
<circle cx="246.0" cy="309.8" r="1.4" fill="#ea2028"/>
<circle cx="250.5" cy="309.7" r="1.4" fill="#ea2028"/>
<circle cx="255.0" cy="309.0" r="1.4" fill="#ea2028"/>
<circle cx="259.4" cy="308.3" r="1.4" fill="#ea2028"/>
<circle cx="263.9" cy="307.7" r="1.4" fill="#ea2028"/>
<circle cx="268.4" cy="306.4" r="1.4" fill="#ea2028"/>
<circle cx="272.8" cy="305.1" r="1.4" fill="#ea2028"/>
<circle cx="277.3" cy="303.8" r="1.4" fill="#ea2028"/>
<circle cx="281.8" cy="302.5" r="1.4" fill="#ea2028"/>
<circle cx="286.2" cy="301.2" r="1.4" fill="#ea2028"/>
<circle cx="290.7" cy="297.8" r="1.4" fill="#ea2028"/>
<circle cx="295.2" cy="293.7" r="1.4" fill="#ea2028"/>
<circle cx="299.6" cy="289.8" r="1.4" fill="#ea2028"/>
<circle cx="304.1" cy="286.7" r="1.4" fill="#ea2028"/>
<circle cx="308.6" cy="283.7" r="1.4" fill="#ea2028"/>
<circle cx="313.0" cy="280.6" r="1.4" fill="#ea2028"/>
<circle cx="317.5" cy="278.0" r="1.4" fill="#ea2028"/>
<circle cx="322.0" cy="275.5" r="1.4" fill="#ea2028"/>
<circle cx="326.4" cy="273.0" r="1.4" fill="#ea2028"/>
<circle cx="330.9" cy="270.5" r="1.4" fill="#ea2028"/>
<circle cx="335.4" cy="268.7" r="1.4" fill="#ea2028"/>
<circle cx="339.8" cy="267.0" r="1.4" fill="#ea2028"/>
<circle cx="344.3" cy="265.3" r="1.4" fill="#ea2028"/>
<circle cx="348.8" cy="265.9" r="1.4" fill="#ea2028"/>
<circle cx="353.2" cy="266.6" r="1.4" fill="#ea2028"/>
<circle cx="357.7" cy="267.8" r="1.4" fill="#ea2028"/>
<circle cx="362.2" cy="269.6" r="1.4" fill="#ea2028"/>
<circle cx="366.6" cy="271.3" r="1.4" fill="#ea2028"/>
<circle cx="371.1" cy="273.1" r="1.4" fill="#ea2028"/>
<circle cx="375.6" cy="275.6" r="1.4" fill="#ea2028"/>
<circle cx="380.0" cy="278.0" r="1.4" fill="#ea2028"/>
<circle cx="384.5" cy="280.5" r="1.4" fill="#ea2028"/>
<circle cx="389.0" cy="282.8" r="1.4" fill="#ea2028"/>
<circle cx="393.4" cy="284.2" r="1.4" fill="#ea2028"/>
<circle cx="397.9" cy="285.6" r="1.4" fill="#ea2028"/>
<circle cx="402.4" cy="286.9" r="1.4" fill="#ea2028"/>
<circle cx="406.8" cy="287.2" r="1.4" fill="#ea2028"/>
<circle cx="411.3" cy="287.4" r="1.4" fill="#ea2028"/>
<circle cx="415.8" cy="287.5" r="1.4" fill="#ea2028"/>
<circle cx="420.2" cy="287.5" r="1.4" fill="#ea2028"/>
<circle cx="424.7" cy="287.5" r="1.4" fill="#ea2028"/>
<circle cx="429.2" cy="287.7" r="1.4" fill="#ea2028"/>
<circle cx="433.6" cy="289.2" r="1.4" fill="#ea2028"/>
<circle cx="438.1" cy="290.6" r="1.4" fill="#ea2028"/>
<circle cx="442.6" cy="292.1" r="1.4" fill="#ea2028"/>
<circle cx="447.0" cy="293.6" r="1.4" fill="#ea2028"/>
<circle cx="451.5" cy="295.5" r="1.4" fill="#ea2028"/>
<circle cx="456.0" cy="297.4" r="1.4" fill="#ea2028"/>
<circle cx="460.4" cy="299.5" r="1.4" fill="#ea2028"/>
<circle cx="464.9" cy="301.7" r="1.4" fill="#ea2028"/>
<circle cx="469.4" cy="304.0" r="1.4" fill="#ea2028"/>
<circle cx="473.8" cy="306.0" r="1.4" fill="#ea2028"/>
<circle cx="478.3" cy="307.9" r="1.4" fill="#ea2028"/>
<circle cx="482.8" cy="309.8" r="1.4" fill="#ea2028"/>
<circle cx="487.2" cy="311.0" r="1.4" fill="#ea2028"/>
<circle cx="491.7" cy="311.8" r="1.4" fill="#ea2028"/>
<circle cx="496.2" cy="312.7" r="1.4" fill="#ea2028"/>
<circle cx="500.6" cy="313.4" r="1.4" fill="#ea2028"/>
<circle cx="505.1" cy="313.9" r="1.4" fill="#ea2028"/>
<circle cx="509.6" cy="314.4" r="1.4" fill="#ea2028"/>
<circle cx="514.0" cy="314.6" r="1.4" fill="#ea2028"/>
<circle cx="518.5" cy="313.8" r="1.4" fill="#ea2028"/>
<circle cx="523.0" cy="313.0" r="1.4" fill="#ea2028"/>
<circle cx="527.4" cy="312.2" r="1.4" fill="#ea2028"/>
<circle cx="531.9" cy="311.4" r="1.4" fill="#ea2028"/>
<circle cx="536.4" cy="310.1" r="1.4" fill="#ea2028"/>
<circle cx="540.8" cy="308.7" r="1.4" fill="#ea2028"/>
<circle cx="545.3" cy="307.4" r="1.4" fill="#ea2028"/>
<circle cx="549.8" cy="306.1" r="1.4" fill="#ea2028"/>
<circle cx="554.2" cy="304.9" r="1.4" fill="#ea2028"/>
<circle cx="558.7" cy="303.8" r="1.4" fill="#ea2028"/>
<circle cx="563.2" cy="302.6" r="1.4" fill="#ea2028"/>
<circle cx="567.6" cy="301.5" r="1.4" fill="#ea2028"/>
<circle cx="572.1" cy="300.6" r="1.4" fill="#ea2028"/>
<circle cx="576.6" cy="299.8" r="1.4" fill="#ea2028"/>
<circle cx="581.0" cy="299.1" r="1.4" fill="#ea2028"/>
<circle cx="585.5" cy="298.3" r="1.4" fill="#ea2028"/>
<circle cx="590.0" cy="297.4" r="1.4" fill="#ea2028"/>
<circle cx="594.4" cy="296.4" r="1.4" fill="#ea2028"/>
<circle cx="598.9" cy="295.3" r="1.4" fill="#ea2028"/>
<circle cx="603.4" cy="294.3" r="1.4" fill="#ea2028"/>
<circle cx="607.8" cy="293.3" r="1.4" fill="#ea2028"/>
<circle cx="612.3" cy="292.5" r="1.4" fill="#ea2028"/>
<circle cx="616.8" cy="291.6" r="1.4" fill="#ea2028"/>
<circle cx="621.2" cy="290.8" r="1.4" fill="#ea2028"/>
<circle cx="625.7" cy="290.0" r="1.4" fill="#ea2028"/>
<circle cx="630.2" cy="290.5" r="1.4" fill="#ea2028"/>
<circle cx="634.6" cy="291.0" r="1.4" fill="#ea2028"/>
<circle cx="639.1" cy="292.0" r="1.4" fill="#ea2028"/>
<circle cx="643.6" cy="293.6" r="1.4" fill="#ea2028"/>
<circle cx="648.0" cy="295.1" r="1.4" fill="#ea2028"/>
<circle cx="652.5" cy="296.5" r="1.4" fill="#ea2028"/>
<circle cx="657.0" cy="298.0" r="1.4" fill="#ea2028"/>
<circle cx="661.4" cy="299.4" r="1.4" fill="#ea2028"/>
<circle cx="665.9" cy="300.9" r="1.4" fill="#ea2028"/>
<circle cx="670.4" cy="305.0" r="1.4" fill="#ea2028"/>
<circle cx="674.8" cy="307.0" r="1.4" fill="#ea2028"/>
<circle cx="679.3" cy="308.0" r="1.4" fill="#ea2028"/>
<circle cx="683.8" cy="308.9" r="1.4" fill="#ea2028"/>
<circle cx="688.2" cy="309.1" r="1.4" fill="#ea2028"/>
<circle cx="692.7" cy="309.2" r="1.4" fill="#ea2028"/>
<circle cx="697.2" cy="309.2" r="1.4" fill="#ea2028"/>
<circle cx="701.7" cy="309.3" r="1.4" fill="#ea2028"/>
<circle cx="706.1" cy="309.3" r="1.4" fill="#ea2028"/>
<circle cx="710.6" cy="309.3" r="1.4" fill="#ea2028"/>
<circle cx="715.1" cy="309.4" r="1.4" fill="#ea2028"/>
<circle cx="719.5" cy="309.4" r="1.4" fill="#ea2028"/>
<circle cx="724.0" cy="309.5" r="1.4" fill="#ea2028"/>
<circle cx="728.5" cy="309.5" r="1.4" fill="#ea2028"/>
<circle cx="732.9" cy="308.9" r="1.4" fill="#ea2028"/>
<circle cx="737.4" cy="308.2" r="1.4" fill="#ea2028"/>
<circle cx="741.9" cy="307.8" r="1.4" fill="#ea2028"/>
<circle cx="746.3" cy="307.5" r="1.4" fill="#ea2028"/>
<circle cx="750.8" cy="307.3" r="1.4" fill="#ea2028"/>
<circle cx="755.3" cy="307.9" r="1.4" fill="#ea2028"/>
<circle cx="759.7" cy="308.8" r="1.4" fill="#ea2028"/>
<circle cx="764.2" cy="309.7" r="1.4" fill="#ea2028"/>
<circle cx="768.7" cy="310.6" r="1.4" fill="#ea2028"/>
<circle cx="773.1" cy="311.6" r="1.4" fill="#ea2028"/>
<circle cx="777.6" cy="312.6" r="1.4" fill="#ea2028"/>
<circle cx="782.1" cy="313.9" r="1.4" fill="#ea2028"/>
<circle cx="786.5" cy="315.2" r="1.4" fill="#ea2028"/>
<circle cx="791.0" cy="316.4" r="1.4" fill="#ea2028"/>
<circle cx="795.5" cy="317.1" r="1.4" fill="#ea2028"/>
<circle cx="799.9" cy="317.5" r="1.4" fill="#ea2028"/>
<circle cx="804.4" cy="317.9" r="1.4" fill="#ea2028"/>
<circle cx="808.9" cy="318.4" r="1.4" fill="#ea2028"/>
<circle cx="813.3" cy="318.8" r="1.4" fill="#ea2028"/>
<circle cx="817.8" cy="319.2" r="1.4" fill="#ea2028"/>
<circle cx="822.3" cy="319.3" r="1.4" fill="#ea2028"/>
<circle cx="826.7" cy="319.0" r="1.4" fill="#ea2028"/>
<circle cx="831.2" cy="318.8" r="1.4" fill="#ea2028"/>
<circle cx="835.7" cy="318.5" r="1.4" fill="#ea2028"/>
<circle cx="840.1" cy="318.2" r="1.4" fill="#ea2028"/>
<circle cx="844.6" cy="318.0" r="1.4" fill="#ea2028"/>
<circle cx="849.1" cy="317.7" r="1.4" fill="#ea2028"/>
<circle cx="853.5" cy="317.5" r="1.4" fill="#ea2028"/>
<circle cx="858.0" cy="317.2" r="1.4" fill="#ea2028"/>
<circle cx="862.5" cy="317.0" r="1.4" fill="#ea2028"/>
<circle cx="866.9" cy="316.8" r="1.4" fill="#ea2028"/>
<circle cx="871.4" cy="316.0" r="1.4" fill="#ea2028"/>
<circle cx="875.9" cy="315.0" r="1.4" fill="#ea2028"/>
</g>
<line x1="344.5" y1="259" x2="344.5" y2="323" stroke="#7d93ab" stroke-width="1"/>
<g clip-path="url(#crsi)">
<defs><clipPath id="rA"><rect x="0" y="345" width="952" height="23.5"/></clipPath><clipPath id="rB"><rect x="0" y="368.5" width="952" height="24.1"/></clipPath><linearGradient id="rgB" gradientUnits="userSpaceOnUse" x1="0" y1="368.5" x2="0" y2="392.6"><stop offset="0" stop-color="#6a3a10" stop-opacity="0.30"/><stop offset="1" stop-color="#6a3a10" stop-opacity="0.10"/></linearGradient></defs>
<polygon points="15.0,400.0 15.0,356.6 17.8,345.2 23.5,345.2 31.2,346.1 36.0,350.0 40.7,360.1 45.5,353.8 50.3,345.2 56.0,345.2 61.7,345.2 64.6,349.0 67.5,365.2 72.3,371.9 78.0,365.2 84.7,364.3 90.4,360.5 94.2,362.8 98.0,360.9 102.8,364.3 107.6,360.1 112.4,363.9 117.1,354.4 121.9,363.3 130.5,363.3 136.2,369.1 147.7,375.7 153.4,372.9 159.2,373.8 164.9,368.1 170.6,374.8 175.4,369.1 182.1,371.0 187.8,374.8 192.6,371.0 201.2,388.7 205.0,387.2 210.7,387.6 220.3,382.4 224.1,386.3 229.8,376.7 234.0,374.8 237.6,376.7 245.3,379.2 252.0,378.6 258.6,372.9 264.4,366.6 272.0,366.6 277.7,355.7 285.4,345.2 293.0,345.2 298.8,345.2 306.4,345.2 309.3,345.2 313.7,345.2 317.9,345.2 321.7,345.2 325.5,345.2 331.2,345.2 335.0,345.2 339.8,345.2 343.6,345.2 354.1,369.1 361.8,365.8 372.3,376.7 376.1,378.0 379.0,367.2 384.7,370.0 392.3,369.1 402.8,357.6 407.6,362.4 412.4,360.5 421.0,361.4 428.6,367.2 433.4,382.4 442.0,373.5 450.0,378.6 455.5,384.9 463.2,385.3 465.1,386.4 470.8,384.7 478.5,383.4 488.0,387.6 495.7,386.3 501.4,386.8 509.0,390.6 512.8,375.4 522.4,374.8 528.1,369.1 535.8,370.4 540.5,362.8 548.2,361.4 553.9,364.3 558.7,364.3 562.5,376.7 568.2,369.1 577.8,369.1 581.6,366.2 585.4,367.2 594.0,350.0 598.8,355.7 602.6,354.7 607.4,358.6 616.0,350.9 620.2,373.5 626.5,369.1 635.1,372.3 637.9,370.4 644.6,385.3 651.3,390.1 659.9,384.3 666.0,387.6 669.6,388.7 674.4,389.1 678.8,379.2 683.0,380.5 687.8,377.3 692.6,381.1 696.4,369.6 707.8,380.5 717.4,382.4 723.1,380.5 727.9,380.0 732.7,373.5 740.3,377.7 746.0,379.2 749.9,377.3 753.7,392.9 755.2,395.8 759.4,386.3 765.1,388.2 770.9,389.5 777.5,394.5 781.4,396.4 786.1,390.6 799.5,391.0 804.3,393.9 811.9,396.4 818.6,391.0 824.3,390.1 830.1,396.4 834.8,397.1 839.6,382.4 844.4,382.4 853.0,391.4 858.7,392.9 862.5,387.6 867.3,386.3 872.1,378.0 874.4,377.3 874.4,400.0" fill="#5e3510" fill-opacity="0.9" clip-path="url(#rA)"/>
<polygon points="15.0,400.0 15.0,356.6 17.8,345.2 23.5,345.2 31.2,346.1 36.0,350.0 40.7,360.1 45.5,353.8 50.3,345.2 56.0,345.2 61.7,345.2 64.6,349.0 67.5,365.2 72.3,371.9 78.0,365.2 84.7,364.3 90.4,360.5 94.2,362.8 98.0,360.9 102.8,364.3 107.6,360.1 112.4,363.9 117.1,354.4 121.9,363.3 130.5,363.3 136.2,369.1 147.7,375.7 153.4,372.9 159.2,373.8 164.9,368.1 170.6,374.8 175.4,369.1 182.1,371.0 187.8,374.8 192.6,371.0 201.2,388.7 205.0,387.2 210.7,387.6 220.3,382.4 224.1,386.3 229.8,376.7 234.0,374.8 237.6,376.7 245.3,379.2 252.0,378.6 258.6,372.9 264.4,366.6 272.0,366.6 277.7,355.7 285.4,345.2 293.0,345.2 298.8,345.2 306.4,345.2 309.3,345.2 313.7,345.2 317.9,345.2 321.7,345.2 325.5,345.2 331.2,345.2 335.0,345.2 339.8,345.2 343.6,345.2 354.1,369.1 361.8,365.8 372.3,376.7 376.1,378.0 379.0,367.2 384.7,370.0 392.3,369.1 402.8,357.6 407.6,362.4 412.4,360.5 421.0,361.4 428.6,367.2 433.4,382.4 442.0,373.5 450.0,378.6 455.5,384.9 463.2,385.3 465.1,386.4 470.8,384.7 478.5,383.4 488.0,387.6 495.7,386.3 501.4,386.8 509.0,390.6 512.8,375.4 522.4,374.8 528.1,369.1 535.8,370.4 540.5,362.8 548.2,361.4 553.9,364.3 558.7,364.3 562.5,376.7 568.2,369.1 577.8,369.1 581.6,366.2 585.4,367.2 594.0,350.0 598.8,355.7 602.6,354.7 607.4,358.6 616.0,350.9 620.2,373.5 626.5,369.1 635.1,372.3 637.9,370.4 644.6,385.3 651.3,390.1 659.9,384.3 666.0,387.6 669.6,388.7 674.4,389.1 678.8,379.2 683.0,380.5 687.8,377.3 692.6,381.1 696.4,369.6 707.8,380.5 717.4,382.4 723.1,380.5 727.9,380.0 732.7,373.5 740.3,377.7 746.0,379.2 749.9,377.3 753.7,392.9 755.2,395.8 759.4,386.3 765.1,388.2 770.9,389.5 777.5,394.5 781.4,396.4 786.1,390.6 799.5,391.0 804.3,393.9 811.9,396.4 818.6,391.0 824.3,390.1 830.1,396.4 834.8,397.1 839.6,382.4 844.4,382.4 853.0,391.4 858.7,392.9 862.5,387.6 867.3,386.3 872.1,378.0 874.4,377.3 874.4,400.0" fill="url(#rgB)" clip-path="url(#rB)"/>
<line x1="15.5" y1="368.5" x2="889.5" y2="368.5" stroke="#737e8a" stroke-dasharray="3,3" opacity="0.8"/>
<line x1="16" y1="345.2" x2="875" y2="345.2" stroke="#1a1ab4" stroke-width="2"/>
<line x1="16" y1="392.6" x2="875" y2="392.6" stroke="#1a1ab4" stroke-width="2"/>
<polyline points="15.0,356.6 17.8,345.2 23.5,344.8 31.2,346.1 36.0,350.0 40.7,360.1 45.5,353.8 50.3,345.2 56.0,342.3 61.7,344.2 64.6,349.0 67.5,365.2 72.3,371.9 78.0,365.2 84.7,364.3 90.4,360.5 94.2,362.8 98.0,360.9 102.8,364.3 107.6,360.1 112.4,363.9 117.1,354.4 121.9,363.3 130.5,363.3 136.2,369.1 147.7,375.7 153.4,372.9 159.2,373.8 164.9,368.1 170.6,374.8 175.4,369.1 182.1,371.0 187.8,374.8 192.6,371.0 201.2,388.7 205.0,387.2 210.7,387.6 220.3,382.4 224.1,386.3 229.8,376.7 234.0,374.8 237.6,376.7 245.3,379.2 252.0,378.6 258.6,372.9 264.4,366.6 272.0,366.6 277.7,355.7 285.4,345.2 293.0,336.6 298.8,335.3 306.4,332.8 309.3,333.7 313.7,340.4 317.9,334.1 321.7,344.8 325.5,344.8 331.2,344.2 335.0,341.8 339.8,337.9 343.6,344.8 354.1,369.1 361.8,365.8 372.3,376.7 376.1,378.0 379.0,367.2 384.7,370.0 392.3,369.1 402.8,357.6 407.6,362.4 412.4,360.5 421.0,361.4 428.6,367.2 433.4,382.4 442.0,373.5 450.0,378.6 455.5,384.9 463.2,385.3 465.1,386.4 470.8,384.7 478.5,383.4 488.0,387.6 495.7,386.3 501.4,386.8 509.0,390.6 512.8,375.4 522.4,374.8 528.1,369.1 535.8,370.4 540.5,362.8 548.2,361.4 553.9,364.3 558.7,364.3 562.5,376.7 568.2,369.1 577.8,369.1 581.6,366.2 585.4,367.2 594.0,350.0 598.8,355.7 602.6,354.7 607.4,358.6 616.0,350.9 620.2,373.5 626.5,369.1 635.1,372.3 637.9,370.4 644.6,385.3 651.3,390.1 659.9,384.3 666.0,387.6 669.6,388.7 674.4,389.1 678.8,379.2 683.0,380.5 687.8,377.3 692.6,381.1 696.4,369.6 707.8,380.5 717.4,382.4 723.1,380.5 727.9,380.0 732.7,373.5 740.3,377.7 746.0,379.2 749.9,377.3 753.7,392.9 755.2,395.8 759.4,386.3 765.1,388.2 770.9,389.5 777.5,394.5 781.4,396.4 786.1,390.6 799.5,391.0 804.3,393.9 811.9,396.4 818.6,391.0 824.3,390.1 830.1,396.4 834.8,397.1 839.6,382.4 844.4,382.4 853.0,391.4 858.7,392.9 862.5,387.6 867.3,386.3 872.1,378.0 874.4,377.3" fill="none" stroke="#f08a3e" stroke-width="1.2" stroke-linejoin="round"/>
<line x1="17.8" y1="345.2" x2="23.5" y2="344.8" stroke="#c832e0" stroke-width="1.2" stroke-linecap="round"/>
<line x1="23.5" y1="344.8" x2="31.2" y2="346.1" stroke="#c832e0" stroke-width="1.2" stroke-linecap="round"/>
<line x1="50.3" y1="345.2" x2="56" y2="342.3" stroke="#c832e0" stroke-width="1.2" stroke-linecap="round"/>
<line x1="56" y1="342.3" x2="61.7" y2="344.2" stroke="#c832e0" stroke-width="1.2" stroke-linecap="round"/>
<line x1="61.7" y1="344.2" x2="64.6" y2="349" stroke="#c832e0" stroke-width="1.2" stroke-linecap="round"/>
<line x1="285.4" y1="345.2" x2="293" y2="336.6" stroke="#c832e0" stroke-width="1.2" stroke-linecap="round"/>
<line x1="293" y1="336.6" x2="298.8" y2="335.3" stroke="#c832e0" stroke-width="1.2" stroke-linecap="round"/>
<line x1="298.8" y1="335.3" x2="306.4" y2="332.8" stroke="#c832e0" stroke-width="1.2" stroke-linecap="round"/>
<line x1="306.4" y1="332.8" x2="309.3" y2="333.7" stroke="#c832e0" stroke-width="1.2" stroke-linecap="round"/>
<line x1="309.3" y1="333.7" x2="313.7" y2="340.4" stroke="#c832e0" stroke-width="1.2" stroke-linecap="round"/>
<line x1="313.7" y1="340.4" x2="317.9" y2="334.1" stroke="#c832e0" stroke-width="1.2" stroke-linecap="round"/>
<line x1="317.9" y1="334.1" x2="321.7" y2="344.8" stroke="#c832e0" stroke-width="1.2" stroke-linecap="round"/>
<line x1="321.7" y1="344.8" x2="325.5" y2="344.8" stroke="#c832e0" stroke-width="1.2" stroke-linecap="round"/>
<line x1="325.5" y1="344.8" x2="331.2" y2="344.2" stroke="#c832e0" stroke-width="1.2" stroke-linecap="round"/>
<line x1="331.2" y1="344.2" x2="335" y2="341.8" stroke="#c832e0" stroke-width="1.2" stroke-linecap="round"/>
<line x1="335" y1="341.8" x2="339.8" y2="337.9" stroke="#c832e0" stroke-width="1.2" stroke-linecap="round"/>
<line x1="339.8" y1="337.9" x2="343.6" y2="344.8" stroke="#c832e0" stroke-width="1.2" stroke-linecap="round"/>
<line x1="749.9" y1="377.3" x2="753.7" y2="392.9" stroke="#2ee02e" stroke-width="1.2" stroke-linecap="round"/>
<line x1="753.7" y1="392.9" x2="755.2" y2="395.8" stroke="#2ee02e" stroke-width="1.2" stroke-linecap="round"/>
<line x1="770.9" y1="389.5" x2="777.5" y2="394.5" stroke="#2ee02e" stroke-width="1.2" stroke-linecap="round"/>
<line x1="777.5" y1="394.5" x2="781.4" y2="396.4" stroke="#2ee02e" stroke-width="1.2" stroke-linecap="round"/>
<line x1="781.4" y1="396.4" x2="786.1" y2="390.6" stroke="#2ee02e" stroke-width="1.2" stroke-linecap="round"/>
<line x1="799.5" y1="391" x2="804.3" y2="393.9" stroke="#2ee02e" stroke-width="1.2" stroke-linecap="round"/>
<line x1="804.3" y1="393.9" x2="811.9" y2="396.4" stroke="#2ee02e" stroke-width="1.2" stroke-linecap="round"/>
<line x1="811.9" y1="396.4" x2="818.6" y2="391" stroke="#2ee02e" stroke-width="1.2" stroke-linecap="round"/>
<line x1="824.3" y1="390.1" x2="830.1" y2="396.4" stroke="#2ee02e" stroke-width="1.2" stroke-linecap="round"/>
<line x1="830.1" y1="396.4" x2="834.8" y2="397.1" stroke="#2ee02e" stroke-width="1.2" stroke-linecap="round"/>
<line x1="853" y1="391.4" x2="858.7" y2="392.9" stroke="#2ee02e" stroke-width="1.2" stroke-linecap="round"/>
<text x="17.8" y="341.8" textLength="14.5" lengthAdjust="spacingAndGlyphs" style="font-size:10px;fill:#f08a3e">RSI</text>
</g>
<line x1="344.5" y1="331" x2="344.5" y2="377" stroke="#7d93ab" stroke-width="1"/>
<line x1="16.5" y1="377" x2="16.5" y2="404" stroke="#d6eef2" stroke-width="2"/>
<path d="M16.5 377.5 H73.5 L75.5 379.5 V394 L73.5 396 H16.5 Z" fill="#5a6a7e" stroke="#c4d8e2"/>
<text x="22.8" y="391" textLength="46.6" lengthAdjust="spacing" style="font-size:10.5px;fill:#f4f6f8">Дек 2019</text>
<line x1="345" y1="377" x2="345" y2="404" stroke="#d6eef2" stroke-width="2"/>
<path d="M345 377.5 H403.5 L405.5 379.5 V394 L403.5 396 H345 Z" fill="#5a6a7e" stroke="#c4d8e2"/>
<text x="352.5" y="391" textLength="45.7" lengthAdjust="spacing" style="font-size:10.5px;fill:#f4f6f8">Янв 2020</text>
<rect x="15.5" y="37.5" width="874.0" height="215.0" fill="none" stroke="#adc1d3"/>
<rect x="15.5" y="258.5" width="874.0" height="65.0" fill="none" stroke="#adc1d3"/>
<path d="M15.5 330.5 H889.5 V400.5" fill="none" stroke="#adc1d3"/>
<line x1="15.5" y1="400.5" x2="889.5" y2="400.5" stroke="#adc1d3" stroke-width="1.3"/>
<line x1="23.5" y1="398" x2="23.5" y2="404" stroke="#adc1d3"/>
<text x="23.4" y="423" class="xl" text-anchor="middle">12</text>
<line x1="49.5" y1="398" x2="49.5" y2="404" stroke="#adc1d3"/>
<text x="49.5" y="423" class="xl" text-anchor="middle">13</text>
<line x1="76.5" y1="398" x2="76.5" y2="404" stroke="#adc1d3"/>
<text x="76.3" y="423" class="xl" text-anchor="middle">16</text>
<line x1="103.5" y1="398" x2="103.5" y2="404" stroke="#adc1d3"/>
<text x="103.4" y="423" class="xl" text-anchor="middle">17</text>
<line x1="130.5" y1="398" x2="130.5" y2="404" stroke="#adc1d3"/>
<text x="130.2" y="423" class="xl" text-anchor="middle">18</text>
<line x1="156.5" y1="398" x2="156.5" y2="404" stroke="#adc1d3"/>
<text x="156.8" y="423" class="xl" text-anchor="middle">19</text>
<line x1="183.5" y1="398" x2="183.5" y2="404" stroke="#adc1d3"/>
<text x="183.6" y="423" class="xl" text-anchor="middle">20</text>
<line x1="210.5" y1="398" x2="210.5" y2="404" stroke="#adc1d3"/>
<text x="210.4" y="423" class="xl" text-anchor="middle">23</text>
<line x1="237.5" y1="398" x2="237.5" y2="404" stroke="#adc1d3"/>
<text x="237.5" y="423" class="xl" text-anchor="middle">24</text>
<line x1="259.5" y1="398" x2="259.5" y2="404" stroke="#adc1d3"/>
<text x="259.6" y="423" class="xl" text-anchor="middle">26</text>
<line x1="272.5" y1="398" x2="272.5" y2="404" stroke="#adc1d3"/>
<text x="272.1" y="423" class="xl" text-anchor="middle">27</text>
<line x1="299.5" y1="398" x2="299.5" y2="404" stroke="#adc1d3"/>
<text x="299.5" y="423" class="xl" text-anchor="middle">30</text>
<line x1="326.5" y1="398" x2="326.5" y2="404" stroke="#adc1d3"/>
<text x="326.4" y="423" class="xl" text-anchor="middle">31</text>
<line x1="344.5" y1="398" x2="344.5" y2="404" stroke="#adc1d3"/>
<text x="344.6" y="423" class="xl" text-anchor="middle">2</text>
<line x1="362.5" y1="398" x2="362.5" y2="404" stroke="#adc1d3"/>
<text x="362.8" y="423" class="xl" text-anchor="middle">3</text>
<line x1="388.5" y1="398" x2="388.5" y2="404" stroke="#adc1d3"/>
<text x="388.9" y="423" class="xl" text-anchor="middle">6</text>
<line x1="415.5" y1="398" x2="415.5" y2="404" stroke="#adc1d3"/>
<text x="415.4" y="423" class="xl" text-anchor="middle">7</text>
<line x1="442.5" y1="398" x2="442.5" y2="404" stroke="#adc1d3"/>
<text x="442.8" y="423" class="xl" text-anchor="middle">8</text>
<line x1="469.5" y1="398" x2="469.5" y2="404" stroke="#adc1d3"/>
<text x="469.6" y="423" class="xl" text-anchor="middle">9</text>
<line x1="495.5" y1="398" x2="495.5" y2="404" stroke="#adc1d3"/>
<text x="495.6" y="423" class="xl" text-anchor="middle">10</text>
<line x1="522.5" y1="398" x2="522.5" y2="404" stroke="#adc1d3"/>
<text x="522.6" y="423" class="xl" text-anchor="middle">13</text>
<line x1="549.5" y1="398" x2="549.5" y2="404" stroke="#adc1d3"/>
<text x="549.5" y="423" class="xl" text-anchor="middle">14</text>
<line x1="576.5" y1="398" x2="576.5" y2="404" stroke="#adc1d3"/>
<text x="576.5" y="423" class="xl" text-anchor="middle">15</text>
<line x1="603.5" y1="398" x2="603.5" y2="404" stroke="#adc1d3"/>
<text x="603.7" y="423" class="xl" text-anchor="middle">16</text>
<line x1="629.5" y1="398" x2="629.5" y2="404" stroke="#adc1d3"/>
<text x="629.4" y="423" class="xl" text-anchor="middle">17</text>
<line x1="656.5" y1="398" x2="656.5" y2="404" stroke="#adc1d3"/>
<text x="656.2" y="423" class="xl" text-anchor="middle">20</text>
<line x1="683.5" y1="398" x2="683.5" y2="404" stroke="#adc1d3"/>
<text x="683.4" y="423" class="xl" text-anchor="middle">21</text>
<line x1="710.5" y1="398" x2="710.5" y2="404" stroke="#adc1d3"/>
<text x="710" y="423" class="xl" text-anchor="middle">22</text>
<line x1="736.5" y1="398" x2="736.5" y2="404" stroke="#adc1d3"/>
<text x="736.5" y="423" class="xl" text-anchor="middle">23</text>
<line x1="763.5" y1="398" x2="763.5" y2="404" stroke="#adc1d3"/>
<text x="763.7" y="423" class="xl" text-anchor="middle">24</text>
<line x1="790.5" y1="398" x2="790.5" y2="404" stroke="#adc1d3"/>
<text x="790.2" y="423" class="xl" text-anchor="middle">27</text>
<line x1="817.5" y1="398" x2="817.5" y2="404" stroke="#adc1d3"/>
<text x="817.2" y="423" class="xl" text-anchor="middle">28</text>
<line x1="843.5" y1="398" x2="843.5" y2="404" stroke="#adc1d3"/>
<text x="843.4" y="423" class="xl" text-anchor="middle">29</text>
<line x1="870.5" y1="398" x2="870.5" y2="404" stroke="#adc1d3"/>
<text x="870.5" y="423" class="xl" text-anchor="middle">30</text>
<rect x="888.5" y="212" width="48.5" height="21" fill="#ffffff"/>
<text x="898" y="226.5" style="font-size:10.5px;fill:#4a4560">1.1015</text>
</svg>
</div>
</body></html>
